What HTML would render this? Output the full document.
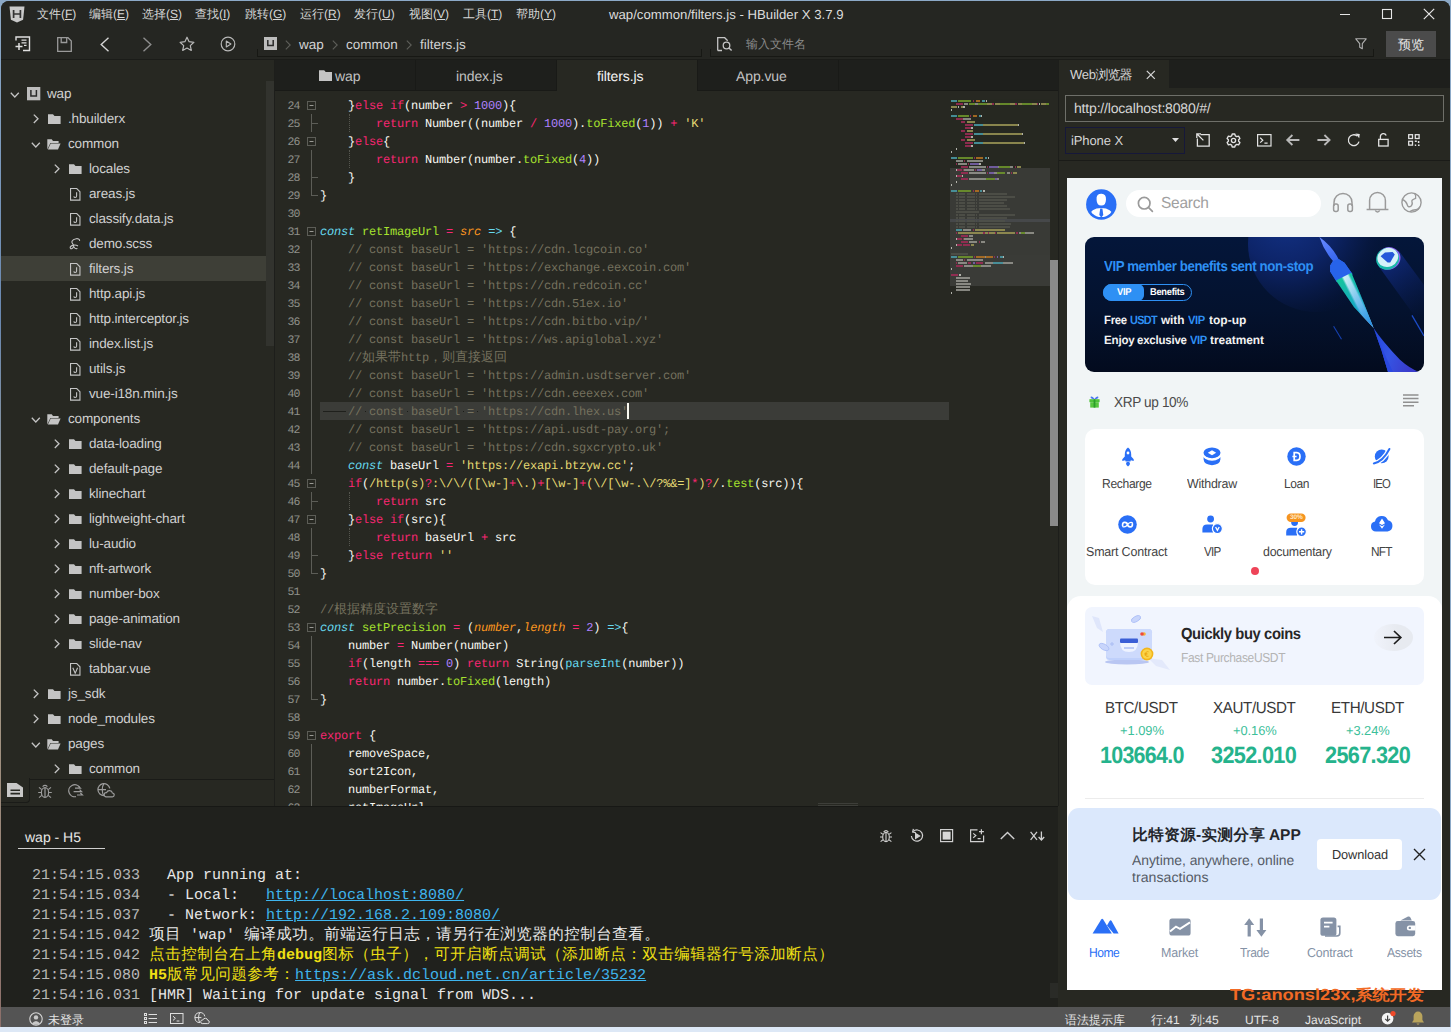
<!DOCTYPE html>
<html><head><meta charset="utf-8"><title>HBuilder X</title>
<style>
html,body{margin:0;padding:0}
body{width:1451px;height:1032px;position:relative;overflow:hidden;background:#dde8f6;text-rendering:geometricPrecision;font-family:"Liberation Sans",sans-serif;color:#ccc}
.a{position:absolute}
#win{position:absolute;left:1px;top:1px;width:1449px;height:1026px;background:#272822;border-radius:8px 8px 0 0;overflow:hidden}
/* every child below is positioned in page coords via #o offset */
#o{position:absolute;left:-1px;top:-1px;width:1451px;height:1032px}
.t{position:absolute;white-space:nowrap;line-height:1}
svg{position:absolute;overflow:visible}
.ic{stroke:#c8c8c8;fill:none;stroke-width:1.3}
/* menu */
.m{position:absolute;top:7px;font-size:12px;line-height:15px;color:#d6d6d6;white-space:nowrap}
/* tree */
.row{position:absolute;left:1px;width:265px;height:25px}
.row.sel{background:#3e3f37}
.tl{position:absolute;top:4px;font-size:13.5px;line-height:17px;color:#d0d0d0;white-space:nowrap;letter-spacing:-0.15px}
/* code */
.ln{position:absolute;left:275.5px;width:24px;text-align:right;font:11.5px/19px "Liberation Mono",monospace;color:#8f908a;letter-spacing:-0.9px}
.cl{position:absolute;left:320px;font:12px/18px "Liberation Mono",monospace;letter-spacing:-0.2px;color:#f8f8f2;white-space:pre;height:18px}
.k{color:#f92672}.f{color:#a6e22e}.s{color:#e6db74}.n{color:#ae81ff}.c{color:#75715e}.d{color:#66d9ef;font-style:italic}.p{color:#fd971f;font-style:italic}.b{color:#66d9ef}
.cj{font-family:"Liberation Sans",sans-serif;font-size:13px;letter-spacing:0;line-height:0}
/* console */
.co{position:absolute;left:32px;font:15px/20px "Liberation Mono",monospace;color:#e8e8e8;white-space:pre;height:20px}
.co .ts{color:#b8b8b8}
.co .y{color:#f0e014}
.co u{color:#3fb5ee}
.cz{font-family:"Liberation Sans",sans-serif;font-size:15.5px;line-height:0}
.z{display:inline-block;text-align:center;font-style:normal;line-height:0;height:0;vertical-align:baseline;white-space:nowrap;letter-spacing:0}
/* status */
.st{position:absolute;top:1012.5px;font-size:12px;line-height:14px;color:#e4e4e4;white-space:nowrap}
</style></head><body>
<div class="a" style="left:0;top:0;width:1451px;height:12px;background:#8ca9c7"></div><div class="a" style="left:0;top:12px;width:1px;height:1015px;background:linear-gradient(180deg,#8ca9c7,#6a88b0 30%,#a9a08a 60%,#8c6f6a 100%)"></div><div class="a" style="left:1450px;top:12px;width:1px;height:1015px;background:#8ca9c7"></div>
<div id="win"><div id="o">
<!-- ===== title / menu bar ===== -->
<div class="a" style="left:0;top:0;width:1451px;height:60px;background:#252622"></div>
<svg style="left:9px;top:6px" width="16" height="17" viewBox="0 0 16 17"><path d="M0.5 0.5h15l-1.4 13.2L8 16.5 1.9 13.7z" fill="#c9c9c9"/><path d="M4.6 4v8M11.4 4v8M4.6 8h6.8" stroke="#333" stroke-width="1.7" fill="none"/></svg>
<div class="m" style="left:37px"><i class="z" style="width:12px">文</i><i class="z" style="width:12px">件</i>(<u>F</u>)</div>
<div class="m" style="left:89px"><i class="z" style="width:12px">编</i><i class="z" style="width:12px">辑</i>(<u>E</u>)</div>
<div class="m" style="left:142px"><i class="z" style="width:12px">选</i><i class="z" style="width:12px">择</i>(<u>S</u>)</div>
<div class="m" style="left:195px"><i class="z" style="width:12px">查</i><i class="z" style="width:12px">找</i>(<u>I</u>)</div>
<div class="m" style="left:245px"><i class="z" style="width:12px">跳</i><i class="z" style="width:12px">转</i>(<u>G</u>)</div>
<div class="m" style="left:300px"><i class="z" style="width:12px">运</i><i class="z" style="width:12px">行</i>(<u>R</u>)</div>
<div class="m" style="left:354px"><i class="z" style="width:12px">发</i><i class="z" style="width:12px">行</i>(<u>U</u>)</div>
<div class="m" style="left:409px"><i class="z" style="width:12px">视</i><i class="z" style="width:12px">图</i>(<u>V</u>)</div>
<div class="m" style="left:463px"><i class="z" style="width:12px">工</i><i class="z" style="width:12px">具</i>(<u>T</u>)</div>
<div class="m" style="left:516px"><i class="z" style="width:12px">帮</i><i class="z" style="width:12px">助</i>(<u>Y</u>)</div>
<div class="m" style="left:609px;font-size:13.2px;color:#dcdcdc">wap/common/filters.js - HBuilder X 3.7.9</div>
<!-- window controls -->
<svg style="left:1339px;top:8px" width="12" height="12"><path d="M1 6.5h10" stroke="#e6e6e6" stroke-width="1.1"/></svg>
<svg style="left:1381px;top:8px" width="12" height="12"><rect x="1.5" y="1.5" width="9" height="9" fill="none" stroke="#e6e6e6" stroke-width="1.1"/></svg>
<svg style="left:1423px;top:8px" width="12" height="12"><path d="M0.8 0.8l10.4 10.4M11.2 0.8L0.8 11.2" stroke="#e6e6e6" stroke-width="1.2"/></svg>

<!-- ===== toolbar ===== -->
<!-- new file -->
<svg style="left:15px;top:36px" width="16" height="16" class="ic"><path d="M1 4.5V1h13.5v13.5H8" stroke="#e0e0e0" stroke-width="1.4"/><path d="M6.5 4.2h5M6.5 6.8h5M9 9.4h2.5" stroke="#e0e0e0" stroke-width="1.2"/><path d="M0.5 10.5h7M4 7v7" stroke="#e0e0e0" stroke-width="1.5"/></svg>
<!-- save -->
<svg style="left:57px;top:37px" width="15" height="15" class="ic"><path d="M0.7 0.7h10.3l3.3 3.3v10.3H0.7z" stroke="#9a9a9a"/><path d="M4.2 0.7v4.8h5.5V0.7" stroke="#9a9a9a"/></svg>
<!-- back -->
<svg style="left:100px;top:37px" width="10" height="15" class="ic"><path d="M8.5 0.8L1.2 7.5l7.3 6.7" stroke="#d4d4d4" stroke-width="1.4"/></svg>
<!-- fwd -->
<svg style="left:142px;top:37px" width="10" height="15" class="ic"><path d="M1.5 0.8l7.3 6.7-7.3 6.7" stroke="#8c8c8c" stroke-width="1.4"/></svg>
<!-- star -->
<svg style="left:179px;top:36px" width="16" height="16" class="ic"><path d="M8 1.2l2.1 4.5 4.8.6-3.6 3.3 1 4.8L8 12l-4.3 2.4 1-4.8L1.1 6.3l4.8-.6z" stroke="#b8b8b8" stroke-width="1.2" stroke-linejoin="round"/></svg>
<!-- play -->
<svg style="left:220px;top:36px" width="16" height="16" class="ic"><circle cx="8" cy="8" r="6.8" stroke="#b8b8b8" stroke-width="1.2"/><path d="M6.3 5l4.6 3-4.6 3z" stroke="#b8b8b8" stroke-width="1.1" stroke-linejoin="round"/></svg>
<!-- breadcrumb -->
<svg style="left:264px;top:37px" width="14" height="14"><rect x="0" y="0" width="13" height="13" fill="#bdbdbd"/><path d="M3.8 3v5.6h5.4V3" stroke="#2a2a2a" stroke-width="1.5" fill="none"/></svg>
<svg style="left:285px;top:39.5px" width="6" height="10"><path d="M0.8 0.6L5.2 5 0.8 9.4" fill="none" stroke="#5e5f5a" stroke-width="1.1"/></svg>
<div class="t" style="left:299px;top:38px;font-size:13.5px;color:#d2d2d2">wap</div>
<svg style="left:332px;top:39.5px" width="6" height="10"><path d="M0.8 0.6L5.2 5 0.8 9.4" fill="none" stroke="#5e5f5a" stroke-width="1.1"/></svg>
<div class="t" style="left:346px;top:38px;font-size:13.5px;color:#d2d2d2">common</div>
<svg style="left:406px;top:39.5px" width="6" height="10"><path d="M0.8 0.6L5.2 5 0.8 9.4" fill="none" stroke="#5e5f5a" stroke-width="1.1"/></svg>
<div class="t" style="left:420px;top:38px;font-size:13.5px;color:#d2d2d2">filters.js</div>
<div class="a" style="left:257px;top:56px;width:445px;height:1px;background:#171814"></div>
<div class="a" style="left:257px;top:49px;width:1px;height:7px;background:#171814"></div>
<div class="a" style="left:701px;top:49px;width:1px;height:7px;background:#171814"></div>
<!-- search -->
<svg style="left:717px;top:37px" width="16" height="15" class="ic"><path d="M0.7 13.5V0.7h7l3 3" stroke="#c4c4c4" stroke-width="1.3"/><path d="M0.7 13.5H5" stroke="#c4c4c4" stroke-width="1.3"/><circle cx="9.5" cy="8.5" r="3.3" stroke="#c4c4c4" stroke-width="1.3"/><path d="M12 11l2.6 2.6" stroke="#c4c4c4" stroke-width="1.4"/></svg>
<div class="t" style="left:746px;top:38px;font-size:12px;color:#8a8a8a"><i class="z" style="width:12px">输</i><i class="z" style="width:12px">入</i><i class="z" style="width:12px">文</i><i class="z" style="width:12px">件</i><i class="z" style="width:12px">名</i></div>
<div class="a" style="left:710px;top:56px;width:664px;height:1px;background:#171814"></div>
<div class="a" style="left:710px;top:49px;width:1px;height:7px;background:#171814"></div>
<div class="a" style="left:1373px;top:49px;width:1px;height:7px;background:#171814"></div>
<svg style="left:1355px;top:38px" width="12" height="12" class="ic"><path d="M0.8 0.8h10.4L7.3 5.6v5.2l-2.6-1.6V5.6z" stroke="#b0b0b0" stroke-width="1.1" stroke-linejoin="round"/></svg>
<div class="a" style="left:1386px;top:31px;width:50px;height:26px;background:#4b4b4b"></div>
<div class="t" style="left:1398px;top:38px;font-size:13px;color:#e6e6e6"><i class="z" style="width:13px">预</i><i class="z" style="width:13px">览</i></div>
<div class="a" style="left:0;top:59px;width:1451px;height:1px;background:#1b1c19"></div>
<!-- ===== sidebar ===== -->
<div class="a" style="left:0;top:60px;width:274px;height:747px;background:#272822;overflow:hidden">
<div class="a" style="left:0;top:-60px;width:274px;height:840px;overflow:hidden">
<div class="row" style="top:81px"><svg style="left:8.5px;top:10.5px" width="10" height="7"><path d="M0.8 0.8l4 4.2 4-4.2" fill="none" stroke="#c4c4c4" stroke-width="1.3"/></svg><svg style="left:25.5px;top:6px" width="14" height="14"><rect width="13.3" height="13.3" fill="#bdbdbd"/><path d="M3.9 3v5.9h5.5V3" stroke="#2a2a2a" stroke-width="1.5" fill="none"/></svg><div class="tl" style="left:46px">wap</div></div>
<div class="row" style="top:106px"><svg style="left:31.5px;top:8px" width="7" height="10"><path d="M0.8 0.6l4.2 4.2-4.2 4.2" fill="none" stroke="#c4c4c4" stroke-width="1.3"/></svg><svg style="left:47px;top:8px" width="13" height="10"><path d="M0 0.2h5l1.5 1.8H12.6V10H0z" fill="#c4c4c4"/></svg><div class="tl" style="left:67px">.hbuilderx</div></div>
<div class="row" style="top:131px"><svg style="left:29.5px;top:10.5px" width="10" height="7"><path d="M0.8 0.8l4 4.2 4-4.2" fill="none" stroke="#c4c4c4" stroke-width="1.3"/></svg><svg style="left:46px;top:7.5px" width="14" height="11"><path d="M0.3 10.5V0.3h4.4l1.3 1.6H11.6v2H3.4z" fill="#c4c4c4"/><path d="M3.7 4.5H13.6L11 10.5H0.9z" fill="#c4c4c4"/></svg><div class="tl" style="left:67px">common</div></div>
<div class="row" style="top:156px"><svg style="left:52.5px;top:8px" width="7" height="10"><path d="M0.8 0.6l4.2 4.2-4.2 4.2" fill="none" stroke="#c4c4c4" stroke-width="1.3"/></svg><svg style="left:68px;top:8px" width="13" height="10"><path d="M0 0.2h5l1.5 1.8H12.6V10H0z" fill="#c4c4c4"/></svg><div class="tl" style="left:88px">locales</div></div>
<div class="row" style="top:181px"><svg style="left:69px;top:6.5px" width="11" height="13"><path d="M0.55 0.55h6.2l3.2 3.2v8.4H0.55z" fill="none" stroke="#c4c4c4" stroke-width="1.1"/><path d="M6.6 4.2v3.8q0 1.5-1.4 1.5-1.2 0-1.4-1.1" fill="none" stroke="#c4c4c4" stroke-width="1.1"/></svg><div class="tl" style="left:88px">areas.js</div></div>
<div class="row" style="top:206px"><svg style="left:69px;top:6.5px" width="11" height="13"><path d="M0.55 0.55h6.2l3.2 3.2v8.4H0.55z" fill="none" stroke="#c4c4c4" stroke-width="1.1"/><path d="M6.6 4.2v3.8q0 1.5-1.4 1.5-1.2 0-1.4-1.1" fill="none" stroke="#c4c4c4" stroke-width="1.1"/></svg><div class="tl" style="left:88px">classify.data.js</div></div>
<div class="row" style="top:231px"><svg style="left:68px;top:5.5px" width="13" height="15"><path d="M10.6 3.4C10.6 0.6 4.2 1.4 3 4.2 2 6.6 5.4 7 4.6 9.6 4 11.6 1.4 12.6 1.2 10.8 1 8.8 5.8 7 8.6 8.8M4.6 9.6Q6 12.4 8 11.6" fill="none" stroke="#c4c4c4" stroke-width="1.1" stroke-linecap="round"/></svg><div class="tl" style="left:88px">demo.scss</div></div>
<div class="row sel" style="top:256px"><svg style="left:69px;top:6.5px" width="11" height="13"><path d="M0.55 0.55h6.2l3.2 3.2v8.4H0.55z" fill="none" stroke="#c4c4c4" stroke-width="1.1"/><path d="M6.6 4.2v3.8q0 1.5-1.4 1.5-1.2 0-1.4-1.1" fill="none" stroke="#c4c4c4" stroke-width="1.1"/></svg><div class="tl" style="left:88px">filters.js</div></div>
<div class="row" style="top:281px"><svg style="left:69px;top:6.5px" width="11" height="13"><path d="M0.55 0.55h6.2l3.2 3.2v8.4H0.55z" fill="none" stroke="#c4c4c4" stroke-width="1.1"/><path d="M6.6 4.2v3.8q0 1.5-1.4 1.5-1.2 0-1.4-1.1" fill="none" stroke="#c4c4c4" stroke-width="1.1"/></svg><div class="tl" style="left:88px">http.api.js</div></div>
<div class="row" style="top:306px"><svg style="left:69px;top:6.5px" width="11" height="13"><path d="M0.55 0.55h6.2l3.2 3.2v8.4H0.55z" fill="none" stroke="#c4c4c4" stroke-width="1.1"/><path d="M6.6 4.2v3.8q0 1.5-1.4 1.5-1.2 0-1.4-1.1" fill="none" stroke="#c4c4c4" stroke-width="1.1"/></svg><div class="tl" style="left:88px">http.interceptor.js</div></div>
<div class="row" style="top:331px"><svg style="left:69px;top:6.5px" width="11" height="13"><path d="M0.55 0.55h6.2l3.2 3.2v8.4H0.55z" fill="none" stroke="#c4c4c4" stroke-width="1.1"/><path d="M6.6 4.2v3.8q0 1.5-1.4 1.5-1.2 0-1.4-1.1" fill="none" stroke="#c4c4c4" stroke-width="1.1"/></svg><div class="tl" style="left:88px">index.list.js</div></div>
<div class="row" style="top:356px"><svg style="left:69px;top:6.5px" width="11" height="13"><path d="M0.55 0.55h6.2l3.2 3.2v8.4H0.55z" fill="none" stroke="#c4c4c4" stroke-width="1.1"/><path d="M6.6 4.2v3.8q0 1.5-1.4 1.5-1.2 0-1.4-1.1" fill="none" stroke="#c4c4c4" stroke-width="1.1"/></svg><div class="tl" style="left:88px">utils.js</div></div>
<div class="row" style="top:381px"><svg style="left:69px;top:6.5px" width="11" height="13"><path d="M0.55 0.55h6.2l3.2 3.2v8.4H0.55z" fill="none" stroke="#c4c4c4" stroke-width="1.1"/><path d="M6.6 4.2v3.8q0 1.5-1.4 1.5-1.2 0-1.4-1.1" fill="none" stroke="#c4c4c4" stroke-width="1.1"/></svg><div class="tl" style="left:88px">vue-i18n.min.js</div></div>
<div class="row" style="top:406px"><svg style="left:29.5px;top:10.5px" width="10" height="7"><path d="M0.8 0.8l4 4.2 4-4.2" fill="none" stroke="#c4c4c4" stroke-width="1.3"/></svg><svg style="left:46px;top:7.5px" width="14" height="11"><path d="M0.3 10.5V0.3h4.4l1.3 1.6H11.6v2H3.4z" fill="#c4c4c4"/><path d="M3.7 4.5H13.6L11 10.5H0.9z" fill="#c4c4c4"/></svg><div class="tl" style="left:67px">components</div></div>
<div class="row" style="top:431px"><svg style="left:52.5px;top:8px" width="7" height="10"><path d="M0.8 0.6l4.2 4.2-4.2 4.2" fill="none" stroke="#c4c4c4" stroke-width="1.3"/></svg><svg style="left:68px;top:8px" width="13" height="10"><path d="M0 0.2h5l1.5 1.8H12.6V10H0z" fill="#c4c4c4"/></svg><div class="tl" style="left:88px">data-loading</div></div>
<div class="row" style="top:456px"><svg style="left:52.5px;top:8px" width="7" height="10"><path d="M0.8 0.6l4.2 4.2-4.2 4.2" fill="none" stroke="#c4c4c4" stroke-width="1.3"/></svg><svg style="left:68px;top:8px" width="13" height="10"><path d="M0 0.2h5l1.5 1.8H12.6V10H0z" fill="#c4c4c4"/></svg><div class="tl" style="left:88px">default-page</div></div>
<div class="row" style="top:481px"><svg style="left:52.5px;top:8px" width="7" height="10"><path d="M0.8 0.6l4.2 4.2-4.2 4.2" fill="none" stroke="#c4c4c4" stroke-width="1.3"/></svg><svg style="left:68px;top:8px" width="13" height="10"><path d="M0 0.2h5l1.5 1.8H12.6V10H0z" fill="#c4c4c4"/></svg><div class="tl" style="left:88px">klinechart</div></div>
<div class="row" style="top:506px"><svg style="left:52.5px;top:8px" width="7" height="10"><path d="M0.8 0.6l4.2 4.2-4.2 4.2" fill="none" stroke="#c4c4c4" stroke-width="1.3"/></svg><svg style="left:68px;top:8px" width="13" height="10"><path d="M0 0.2h5l1.5 1.8H12.6V10H0z" fill="#c4c4c4"/></svg><div class="tl" style="left:88px">lightweight-chart</div></div>
<div class="row" style="top:531px"><svg style="left:52.5px;top:8px" width="7" height="10"><path d="M0.8 0.6l4.2 4.2-4.2 4.2" fill="none" stroke="#c4c4c4" stroke-width="1.3"/></svg><svg style="left:68px;top:8px" width="13" height="10"><path d="M0 0.2h5l1.5 1.8H12.6V10H0z" fill="#c4c4c4"/></svg><div class="tl" style="left:88px">lu-audio</div></div>
<div class="row" style="top:556px"><svg style="left:52.5px;top:8px" width="7" height="10"><path d="M0.8 0.6l4.2 4.2-4.2 4.2" fill="none" stroke="#c4c4c4" stroke-width="1.3"/></svg><svg style="left:68px;top:8px" width="13" height="10"><path d="M0 0.2h5l1.5 1.8H12.6V10H0z" fill="#c4c4c4"/></svg><div class="tl" style="left:88px">nft-artwork</div></div>
<div class="row" style="top:581px"><svg style="left:52.5px;top:8px" width="7" height="10"><path d="M0.8 0.6l4.2 4.2-4.2 4.2" fill="none" stroke="#c4c4c4" stroke-width="1.3"/></svg><svg style="left:68px;top:8px" width="13" height="10"><path d="M0 0.2h5l1.5 1.8H12.6V10H0z" fill="#c4c4c4"/></svg><div class="tl" style="left:88px">number-box</div></div>
<div class="row" style="top:606px"><svg style="left:52.5px;top:8px" width="7" height="10"><path d="M0.8 0.6l4.2 4.2-4.2 4.2" fill="none" stroke="#c4c4c4" stroke-width="1.3"/></svg><svg style="left:68px;top:8px" width="13" height="10"><path d="M0 0.2h5l1.5 1.8H12.6V10H0z" fill="#c4c4c4"/></svg><div class="tl" style="left:88px">page-animation</div></div>
<div class="row" style="top:631px"><svg style="left:52.5px;top:8px" width="7" height="10"><path d="M0.8 0.6l4.2 4.2-4.2 4.2" fill="none" stroke="#c4c4c4" stroke-width="1.3"/></svg><svg style="left:68px;top:8px" width="13" height="10"><path d="M0 0.2h5l1.5 1.8H12.6V10H0z" fill="#c4c4c4"/></svg><div class="tl" style="left:88px">slide-nav</div></div>
<div class="row" style="top:656px"><svg style="left:69px;top:6.5px" width="11" height="13"><path d="M0.55 0.55h6.2l3.2 3.2v8.4H0.55z" fill="none" stroke="#c4c4c4" stroke-width="1.1"/><path d="M2.8 4.8l2.4 5.4 2.4-5.4" fill="none" stroke="#c4c4c4" stroke-width="1.1"/></svg><div class="tl" style="left:88px">tabbar.vue</div></div>
<div class="row" style="top:681px"><svg style="left:31.5px;top:8px" width="7" height="10"><path d="M0.8 0.6l4.2 4.2-4.2 4.2" fill="none" stroke="#c4c4c4" stroke-width="1.3"/></svg><svg style="left:47px;top:8px" width="13" height="10"><path d="M0 0.2h5l1.5 1.8H12.6V10H0z" fill="#c4c4c4"/></svg><div class="tl" style="left:67px">js_sdk</div></div>
<div class="row" style="top:706px"><svg style="left:31.5px;top:8px" width="7" height="10"><path d="M0.8 0.6l4.2 4.2-4.2 4.2" fill="none" stroke="#c4c4c4" stroke-width="1.3"/></svg><svg style="left:47px;top:8px" width="13" height="10"><path d="M0 0.2h5l1.5 1.8H12.6V10H0z" fill="#c4c4c4"/></svg><div class="tl" style="left:67px">node_modules</div></div>
<div class="row" style="top:731px"><svg style="left:29.5px;top:10.5px" width="10" height="7"><path d="M0.8 0.8l4 4.2 4-4.2" fill="none" stroke="#c4c4c4" stroke-width="1.3"/></svg><svg style="left:46px;top:7.5px" width="14" height="11"><path d="M0.3 10.5V0.3h4.4l1.3 1.6H11.6v2H3.4z" fill="#c4c4c4"/><path d="M3.7 4.5H13.6L11 10.5H0.9z" fill="#c4c4c4"/></svg><div class="tl" style="left:67px">pages</div></div>
<div class="row" style="top:756px"><svg style="left:52.5px;top:8px" width="7" height="10"><path d="M0.8 0.6l4.2 4.2-4.2 4.2" fill="none" stroke="#c4c4c4" stroke-width="1.3"/></svg><svg style="left:68px;top:8px" width="13" height="10"><path d="M0 0.2h5l1.5 1.8H12.6V10H0z" fill="#c4c4c4"/></svg><div class="tl" style="left:88px">common</div></div>
</div>
<div class="a" style="left:266px;top:21px;width:8px;height:265px;background:#32332e"></div>
<div class="a" style="left:0;top:719px;width:274px;height:27px;background:#272822"></div>
<div class="a" style="left:0;top:719px;width:274px;height:1px;background:#1a1b18"></div>
<div class="a" style="left:1px;top:718px;width:28px;height:24px;background:#272822;border-right:1px solid #1a1b18;border-bottom:1px solid #1a1b18;border-radius:0 0 4px 0"></div>
<svg style="left:7px;top:723px" width="17" height="15"><path d="M0 0h9.5l6.5 4.5V14H0z" fill="#c8c8c8"/><path d="M3.5 7.2h9.5M3.5 10.6h9.5" stroke="#272822" stroke-width="1.6"/></svg>
<svg style="left:37px;top:723px" width="16" height="16" fill="none" stroke="#9c9c9c" stroke-width="1.2"><ellipse cx="8" cy="9.5" rx="3.6" ry="4.8"/><path d="M8 4.7v9.6M5.6 3.6Q8 1.2 10.4 3.6M4.4 9.5H1.2M11.6 9.5h3.2M4.8 6.6L2 4.4M11.2 6.6L14 4.4M4.8 12.4L2 14.6M11.2 12.4L14 14.6"/></svg>
<svg style="left:67px;top:723px" width="16" height="16" fill="none" stroke="#9c9c9c" stroke-width="1.2"><path d="M12.6 4.2A6 6 0 1 0 9 13.6"/><path d="M8 5.2h5.4l-1.6-1.6M6.6 8.6h8l-2-2M10 12h5.4l-2-2"/></svg>
<svg style="left:97px;top:723px" width="18" height="16" fill="none" stroke="#9c9c9c" stroke-width="1.2"><path d="M7 12.6A6 6 0 1 1 12.8 5.4"/><path d="M6.8 0.8C4.8 3.6 4.8 9.2 6.6 12.4M1 6.6h8"/><path d="M9 13.8h6.2a1.9 1.9 0 0 0 .2-3.8 3 3 0 0 0-5.8-.4A2.1 2.1 0 0 0 9 13.8z"/></svg>
</div>
<div class="a" style="left:274px;top:60px;width:1px;height:746px;background:#1d1e1b"></div>
<!-- ===== editor tabs ===== -->
<div class="a" style="left:275px;top:60px;width:783px;height:31px;background:#1e1f1c"></div>
<div class="a" style="left:275px;top:60px;width:141px;height:30px;background:#1e1f1c;border-right:1px solid #191a17;box-sizing:border-box"></div>
<div class="a" style="left:416px;top:60px;width:141px;height:30px;background:#1e1f1c;border-right:1px solid #191a17;box-sizing:border-box"></div>
<div class="a" style="left:557px;top:60px;width:141px;height:31px;background:#272822;border-right:1px solid #191a17;box-sizing:border-box"></div>
<div class="a" style="left:698px;top:60px;width:141px;height:30px;background:#1e1f1c;border-right:1px solid #191a17;box-sizing:border-box"></div>
<svg style="left:319px;top:70px" width="13" height="11"><path d="M0 0.3h5.2l1.5 1.8H13V11H0z" fill="#c4c4c4"/></svg>
<div class="t" style="left:335px;top:69px;font-size:14px;letter-spacing:-0.1px;color:#c2c2c2">wap</div>
<div class="t" style="left:456px;top:69px;font-size:14px;letter-spacing:-0.1px;color:#c2c2c2">index.js</div>
<div class="t" style="left:597px;top:69px;font-size:14px;letter-spacing:-0.1px;color:#f4f4f4">filters.js</div>
<div class="t" style="left:736px;top:69px;font-size:14px;letter-spacing:-0.1px;color:#c2c2c2">App.vue</div>
<div class="a" style="left:275px;top:90px;width:282px;height:1px;background:#191a17"></div>
<div class="a" style="left:698px;top:90px;width:360px;height:1px;background:#191a17"></div>
<!-- ===== editor ===== -->
<div class="a" style="left:275px;top:91px;width:783px;height:715px;background:#272822;overflow:hidden"><div class="a" style="left:-275px;top:-91px;width:1451px;height:1032px">
<div class="a" style="left:320px;top:402px;width:629px;height:18px;background:#3b3c38"></div>
<div class="ln" style="top:97px">24</div><div class="cl" style="top:97px">    }<span class="k">else if</span>(number <span class="k">&gt;</span> <span class="n">1000</span>){</div>
<div class="ln" style="top:115px">25</div><div class="cl" style="top:115px">        <span class="k">return</span> Number((number <span class="k">/</span> <span class="n">1000</span>).<span class="f">toFixed</span>(<span class="n">1</span>)) <span class="k">+</span> <span class="s">&#x27;K&#x27;</span></div>
<div class="ln" style="top:133px">26</div><div class="cl" style="top:133px">    }<span class="k">else</span>{</div>
<div class="ln" style="top:151px">27</div><div class="cl" style="top:151px">        <span class="k">return</span> Number(number.<span class="f">toFixed</span>(<span class="n">4</span>))</div>
<div class="ln" style="top:169px">28</div><div class="cl" style="top:169px">    }</div>
<div class="ln" style="top:187px">29</div><div class="cl" style="top:187px">}</div>
<div class="ln" style="top:205px">30</div><div class="cl" style="top:205px"></div>
<div class="ln" style="top:223px">31</div><div class="cl" style="top:223px"><span class="d">const</span> <span class="f">retImageUrl</span> <span class="k">=</span> <span class="p">src</span> <span class="b">=&gt;</span> {</div>
<div class="ln" style="top:241px">32</div><div class="cl" style="top:241px">    <span class="c">// const baseUrl = &#x27;https://cdn.lcgcoin.co&#x27;</span></div>
<div class="ln" style="top:259px">33</div><div class="cl" style="top:259px">    <span class="c">// const baseUrl = &#x27;https://exchange.eexcoin.com&#x27;</span></div>
<div class="ln" style="top:277px">34</div><div class="cl" style="top:277px">    <span class="c">// const baseUrl = &#x27;https://cdn.redcoin.cc&#x27;</span></div>
<div class="ln" style="top:295px">35</div><div class="cl" style="top:295px">    <span class="c">// const baseUrl = &#x27;https://cdn.51ex.io&#x27;</span></div>
<div class="ln" style="top:313px">36</div><div class="cl" style="top:313px">    <span class="c">// const baseUrl = &#x27;https://cdn.bitbo.vip/&#x27;</span></div>
<div class="ln" style="top:331px">37</div><div class="cl" style="top:331px">    <span class="c">// const baseUrl = &#x27;https://ws.apiglobal.xyz&#x27;</span></div>
<div class="ln" style="top:349px">38</div><div class="cl" style="top:349px">    <span class="c">//</span><span class="c cj"><i class="z" style="width:13px">如</i><i class="z" style="width:13px">果</i><i class="z" style="width:13px">带</i></span><span class="c">http</span><span class="c cj"><i class="z" style="width:13px">，</i><i class="z" style="width:13px">则</i><i class="z" style="width:13px">直</i><i class="z" style="width:13px">接</i><i class="z" style="width:13px">返</i><i class="z" style="width:13px">回</i></span></div>
<div class="ln" style="top:367px">39</div><div class="cl" style="top:367px">    <span class="c">// const baseUrl = &#x27;https://admin.usdtserver.com&#x27;</span></div>
<div class="ln" style="top:385px">40</div><div class="cl" style="top:385px">    <span class="c">// const baseUrl = &#x27;https://cdn.eeexex.com&#x27;</span></div>
<div class="ln" style="top:403px">41</div><div class="cl" style="top:403px">    <span class="c">// const baseUrl = &#x27;https://cdn.lhex.us&#x27;</span></div>
<div class="ln" style="top:421px">42</div><div class="cl" style="top:421px">    <span class="c">// const baseUrl = &#x27;https://api.usdt-pay.org&#x27;;</span></div>
<div class="ln" style="top:439px">43</div><div class="cl" style="top:439px">    <span class="c">// const baseUrl = &#x27;https://cdn.sgxcrypto.uk&#x27;</span></div>
<div class="ln" style="top:457px">44</div><div class="cl" style="top:457px">    <span class="d">const</span> baseUrl <span class="k">=</span> <span class="s">&#x27;https://exapi.btzyw.cc&#x27;</span>;</div>
<div class="ln" style="top:475px">45</div><div class="cl" style="top:475px">    <span class="k">if</span>(<span class="s">/http(s)</span><span class="k">?</span><span class="s">:\/\/([\w-]</span><span class="k">+</span><span class="s">\.)</span><span class="k">+</span><span class="s">[\w-]</span><span class="k">+</span><span class="s">(\/[\w-.\/?%&amp;=]</span><span class="k">*</span><span class="s">)</span><span class="k">?</span><span class="s">/</span>.<span class="f">test</span>(src)){</div>
<div class="ln" style="top:493px">46</div><div class="cl" style="top:493px">        <span class="k">return</span> src</div>
<div class="ln" style="top:511px">47</div><div class="cl" style="top:511px">    }<span class="k">else if</span>(src){</div>
<div class="ln" style="top:529px">48</div><div class="cl" style="top:529px">        <span class="k">return</span> baseUrl <span class="k">+</span> src</div>
<div class="ln" style="top:547px">49</div><div class="cl" style="top:547px">    }<span class="k">else return</span> <span class="s">&#x27;&#x27;</span></div>
<div class="ln" style="top:565px">50</div><div class="cl" style="top:565px">}</div>
<div class="ln" style="top:583px">51</div><div class="cl" style="top:583px"></div>
<div class="ln" style="top:601px">52</div><div class="cl" style="top:601px"><span class="c">//</span><span class="c cj"><i class="z" style="width:13px">根</i><i class="z" style="width:13px">据</i><i class="z" style="width:13px">精</i><i class="z" style="width:13px">度</i><i class="z" style="width:13px">设</i><i class="z" style="width:13px">置</i><i class="z" style="width:13px">数</i><i class="z" style="width:13px">字</i></span></div>
<div class="ln" style="top:619px">53</div><div class="cl" style="top:619px"><span class="d">const</span> <span class="f">setPrecision</span> <span class="k">=</span> (<span class="p">number</span>,<span class="p">length</span> <span class="k">=</span> <span class="n">2</span>) <span class="b">=&gt;</span>{</div>
<div class="ln" style="top:637px">54</div><div class="cl" style="top:637px">    number <span class="k">=</span> Number(number)</div>
<div class="ln" style="top:655px">55</div><div class="cl" style="top:655px">    <span class="k">if</span>(length <span class="k">===</span> <span class="n">0</span>) <span class="k">return</span> String(<span class="b">parseInt</span>(number))</div>
<div class="ln" style="top:673px">56</div><div class="cl" style="top:673px">    <span class="k">return</span> number.<span class="f">toFixed</span>(length)</div>
<div class="ln" style="top:691px">57</div><div class="cl" style="top:691px">}</div>
<div class="ln" style="top:709px">58</div><div class="cl" style="top:709px"></div>
<div class="ln" style="top:727px">59</div><div class="cl" style="top:727px"><span class="k">export</span> {</div>
<div class="ln" style="top:745px">60</div><div class="cl" style="top:745px">    removeSpace,</div>
<div class="ln" style="top:763px">61</div><div class="cl" style="top:763px">    sort2Icon,</div>
<div class="ln" style="top:781px">62</div><div class="cl" style="top:781px">    numberFormat,</div>
<div class="ln" style="top:799px">63</div><div class="cl" style="top:799px">    retImageUrl,</div>
<svg style="left:307px;top:101px" width="9" height="9"><rect x="0.5" y="0.5" width="8" height="8" fill="none" stroke="#5c5d57"/><path d="M2.5 4.5h4" stroke="#9a9a95"/></svg>
<svg style="left:307px;top:137px" width="9" height="9"><rect x="0.5" y="0.5" width="8" height="8" fill="none" stroke="#5c5d57"/><path d="M2.5 4.5h4" stroke="#9a9a95"/></svg>
<svg style="left:307px;top:227px" width="9" height="9"><rect x="0.5" y="0.5" width="8" height="8" fill="none" stroke="#5c5d57"/><path d="M2.5 4.5h4" stroke="#9a9a95"/></svg>
<svg style="left:307px;top:479px" width="9" height="9"><rect x="0.5" y="0.5" width="8" height="8" fill="none" stroke="#5c5d57"/><path d="M2.5 4.5h4" stroke="#9a9a95"/></svg>
<svg style="left:307px;top:515px" width="9" height="9"><rect x="0.5" y="0.5" width="8" height="8" fill="none" stroke="#5c5d57"/><path d="M2.5 4.5h4" stroke="#9a9a95"/></svg>
<svg style="left:307px;top:623px" width="9" height="9"><rect x="0.5" y="0.5" width="8" height="8" fill="none" stroke="#5c5d57"/><path d="M2.5 4.5h4" stroke="#9a9a95"/></svg>
<svg style="left:307px;top:731px" width="9" height="9"><rect x="0.5" y="0.5" width="8" height="8" fill="none" stroke="#5c5d57"/><path d="M2.5 4.5h4" stroke="#9a9a95"/></svg>
<div class="a" style="left:311px;top:114px;width:1px;height:18px;background:#5c5d57"></div>
<div class="a" style="left:311px;top:123px;width:7px;height:1px;background:#5c5d57"></div>
<div class="a" style="left:311px;top:150px;width:1px;height:46px;background:#5c5d57"></div>
<div class="a" style="left:311px;top:177px;width:7px;height:1px;background:#5c5d57"></div>
<div class="a" style="left:311px;top:195px;width:7px;height:1px;background:#5c5d57"></div>
<div class="a" style="left:311px;top:240px;width:1px;height:234px;background:#5c5d57"></div>
<div class="a" style="left:311px;top:492px;width:1px;height:18px;background:#5c5d57"></div>
<div class="a" style="left:311px;top:501px;width:7px;height:1px;background:#5c5d57"></div>
<div class="a" style="left:311px;top:528px;width:1px;height:46px;background:#5c5d57"></div>
<div class="a" style="left:311px;top:555px;width:7px;height:1px;background:#5c5d57"></div>
<div class="a" style="left:311px;top:573px;width:7px;height:1px;background:#5c5d57"></div>
<div class="a" style="left:311px;top:636px;width:1px;height:64px;background:#5c5d57"></div>
<div class="a" style="left:311px;top:699px;width:7px;height:1px;background:#5c5d57"></div>
<div class="a" style="left:311px;top:744px;width:1px;height:72px;background:#5c5d57"></div>
<div class="a" style="left:349px;top:114px;width:0;height:18px;border-left:1px dotted #55564f"></div>
<div class="a" style="left:349px;top:150px;width:0;height:18px;border-left:1px dotted #55564f"></div>
<div class="a" style="left:349px;top:492px;width:0;height:18px;border-left:1px dotted #55564f"></div>
<div class="a" style="left:349px;top:528px;width:0;height:18px;border-left:1px dotted #55564f"></div>
<div class="a" style="left:323px;top:411px;width:23px;height:1px;background:#1f201c"></div>
<div class="a" style="left:365px;top:411px;width:1px;height:1px;background:#1c1d19"></div>
<div class="a" style="left:407px;top:411px;width:1px;height:1px;background:#1c1d19"></div>
<div class="a" style="left:463px;top:411px;width:1px;height:1px;background:#1c1d19"></div>
<div class="a" style="left:477px;top:411px;width:1px;height:1px;background:#1c1d19"></div>
<div class="a" style="left:627px;top:403px;width:2px;height:16px;background:#f8f8f0"></div>
</div></div>
<!-- ===== minimap ===== -->
<div class="a" style="left:950px;top:168px;width:100px;height:118px;background:#3a3b37"></div>
<div class="a" style="left:950px;top:219px;width:100px;height:3px;background:#47484a"></div>
<svg style="left:0;top:0" width="1451" height="300" shape-rendering="crispEdges" opacity="0.88">
<rect x="950.9" y="99.9" width="6.1" height="2" fill="#4b9aa6"/>
<rect x="958.1" y="99.9" width="12.9" height="2" fill="#6f962c"/>
<rect x="972.7" y="99.9" width="0.9" height="2" fill="#9c2c55"/>
<rect x="976.0" y="99.9" width="4.4" height="2" fill="#b27122"/>
<rect x="982.1" y="99.9" width="2.6" height="2" fill="#4b9aa6"/>
<rect x="985.8" y="99.9" width="0.9" height="2" fill="#c4c4bc"/>
<rect x="955.9" y="102.9" width="7.0" height="2" fill="#9c2c55"/>
<rect x="964.0" y="102.9" width="4.4" height="2" fill="#94948e"/>
<rect x="968.8" y="102.9" width="6.1" height="2" fill="#6f962c"/>
<rect x="974.9" y="102.9" width="3.3" height="2" fill="#94948e"/>
<rect x="978.2" y="102.9" width="8.7" height="2" fill="#6f962c"/>
<rect x="986.9" y="102.9" width="5.5" height="2" fill="#989254"/>
<rect x="992.3" y="102.9" width="1.3" height="2" fill="#9c2c55"/>
<rect x="995.0" y="102.9" width="5.0" height="2" fill="#989254"/>
<rect x="1000.0" y="102.9" width="9.8" height="2" fill="#6f962c"/>
<rect x="1009.8" y="102.9" width="5.5" height="2" fill="#989254"/>
<rect x="1015.3" y="102.9" width="1.3" height="2" fill="#9c2c55"/>
<rect x="1018.1" y="102.9" width="4.4" height="2" fill="#989254"/>
<rect x="1022.4" y="102.9" width="9.2" height="2" fill="#6f962c"/>
<rect x="1031.6" y="102.9" width="5.5" height="2" fill="#989254"/>
<rect x="1037.1" y="102.9" width="1.3" height="2" fill="#9c2c55"/>
<rect x="1039.2" y="102.9" width="1.1" height="2" fill="#c4c4bc"/>
<rect x="1041.0" y="102.9" width="4.8" height="2" fill="#989254"/>
<rect x="1045.8" y="102.9" width="3.3" height="2" fill="#6f962c"/>
<rect x="950.9" y="105.9" width="6.5" height="2" fill="#989254"/>
<rect x="957.9" y="105.9" width="0.9" height="2" fill="#c4c4bc"/>
<rect x="961.2" y="105.9" width="1.7" height="2" fill="#989254"/>
<rect x="962.9" y="105.9" width="2.0" height="2" fill="#c4c4bc"/>
<rect x="950.9" y="108.9" width="0.9" height="2" fill="#c4c4bc"/>
<rect x="950.9" y="114.9" width="6.1" height="2" fill="#4b9aa6"/>
<rect x="958.1" y="114.9" width="10.9" height="2" fill="#6f962c"/>
<rect x="970.1" y="114.9" width="0.9" height="2" fill="#9c2c55"/>
<rect x="972.7" y="114.9" width="4.4" height="2" fill="#b27122"/>
<rect x="978.8" y="114.9" width="2.6" height="2" fill="#4b9aa6"/>
<rect x="981.0" y="114.9" width="0.9" height="2" fill="#c4c4bc"/>
<rect x="955.9" y="117.9" width="7.0" height="2" fill="#9c2c55"/>
<rect x="962.9" y="117.9" width="8.1" height="2" fill="#94948e"/>
<rect x="961.2" y="120.9" width="3.9" height="2" fill="#9c2c55"/>
<rect x="966.8" y="120.9" width="8.1" height="2" fill="#989254"/>
<rect x="965.1" y="123.9" width="7.6" height="2" fill="#9c2c55"/>
<rect x="973.8" y="123.9" width="8.7" height="2" fill="#4b9aa6"/>
<rect x="982.5" y="123.9" width="35.6" height="2" fill="#989254"/>
<rect x="1018.1" y="123.9" width="1.1" height="2" fill="#c4c4bc"/>
<rect x="965.1" y="126.9" width="6.1" height="2" fill="#9c2c55"/>
<rect x="971.2" y="126.9" width="1.7" height="2" fill="#c4c4bc"/>
<rect x="961.2" y="129.9" width="3.9" height="2" fill="#9c2c55"/>
<rect x="966.8" y="129.9" width="6.1" height="2" fill="#989254"/>
<rect x="965.1" y="132.9" width="7.6" height="2" fill="#9c2c55"/>
<rect x="973.8" y="132.9" width="8.7" height="2" fill="#4b9aa6"/>
<rect x="982.5" y="132.9" width="39.5" height="2" fill="#989254"/>
<rect x="1022.0" y="132.9" width="1.1" height="2" fill="#c4c4bc"/>
<rect x="965.1" y="135.9" width="6.1" height="2" fill="#9c2c55"/>
<rect x="971.2" y="135.9" width="1.7" height="2" fill="#c4c4bc"/>
<rect x="961.2" y="138.9" width="3.9" height="2" fill="#9c2c55"/>
<rect x="966.8" y="138.9" width="8.1" height="2" fill="#989254"/>
<rect x="965.1" y="141.9" width="7.6" height="2" fill="#9c2c55"/>
<rect x="973.8" y="141.9" width="8.7" height="2" fill="#4b9aa6"/>
<rect x="982.5" y="141.9" width="41.7" height="2" fill="#989254"/>
<rect x="1024.2" y="141.9" width="1.1" height="2" fill="#c4c4bc"/>
<rect x="965.1" y="144.9" width="6.1" height="2" fill="#9c2c55"/>
<rect x="971.2" y="144.9" width="1.7" height="2" fill="#c4c4bc"/>
<rect x="955.9" y="147.9" width="0.9" height="2" fill="#c4c4bc"/>
<rect x="950.9" y="150.9" width="0.9" height="2" fill="#c4c4bc"/>
<rect x="950.9" y="156.9" width="6.1" height="2" fill="#4b9aa6"/>
<rect x="958.1" y="156.9" width="14.8" height="2" fill="#6f962c"/>
<rect x="974.0" y="156.9" width="0.9" height="2" fill="#9c2c55"/>
<rect x="976.0" y="156.9" width="7.0" height="2" fill="#b27122"/>
<rect x="985.2" y="156.9" width="1.7" height="2" fill="#4b9aa6"/>
<rect x="988.0" y="156.9" width="0.9" height="2" fill="#c4c4bc"/>
<rect x="955.9" y="159.9" width="7.0" height="2" fill="#94948e"/>
<rect x="964.0" y="159.9" width="0.9" height="2" fill="#9c2c55"/>
<rect x="966.8" y="159.9" width="16.1" height="2" fill="#94948e"/>
<rect x="955.9" y="162.9" width="1.3" height="2" fill="#9c2c55"/>
<rect x="957.9" y="162.9" width="8.9" height="2" fill="#94948e"/>
<rect x="967.9" y="162.9" width="0.9" height="2" fill="#9c2c55"/>
<rect x="969.9" y="162.9" width="9.4" height="2" fill="#7a62ad"/>
<rect x="979.3" y="162.9" width="1.7" height="2" fill="#c4c4bc"/>
<rect x="961.2" y="165.9" width="6.8" height="2" fill="#9c2c55"/>
<rect x="969.0" y="165.9" width="16.8" height="2" fill="#94948e"/>
<rect x="986.9" y="165.9" width="0.9" height="2" fill="#9c2c55"/>
<rect x="989.1" y="165.9" width="8.7" height="2" fill="#7a62ad"/>
<rect x="997.8" y="165.9" width="1.5" height="2" fill="#94948e"/>
<rect x="999.3" y="165.9" width="10.5" height="2" fill="#6f962c"/>
<rect x="1009.8" y="165.9" width="3.3" height="2" fill="#94948e"/>
<rect x="1014.8" y="165.9" width="0.9" height="2" fill="#9c2c55"/>
<rect x="1017.0" y="165.9" width="4.1" height="2" fill="#989254"/>
<rect x="955.9" y="168.9" width="1.1" height="2" fill="#c4c4bc"/>
<rect x="957.0" y="168.9" width="4.8" height="2" fill="#9c2c55"/>
<rect x="962.9" y="168.9" width="1.5" height="2" fill="#9c2c55"/>
<rect x="964.4" y="168.9" width="9.4" height="2" fill="#94948e"/>
<rect x="974.9" y="168.9" width="0.9" height="2" fill="#9c2c55"/>
<rect x="977.1" y="168.9" width="4.8" height="2" fill="#7a62ad"/>
<rect x="981.9" y="168.9" width="3.1" height="2" fill="#94948e"/>
<rect x="961.2" y="171.9" width="6.8" height="2" fill="#9c2c55"/>
<rect x="969.0" y="171.9" width="16.8" height="2" fill="#94948e"/>
<rect x="986.9" y="171.9" width="0.9" height="2" fill="#9c2c55"/>
<rect x="989.1" y="171.9" width="4.8" height="2" fill="#7a62ad"/>
<rect x="993.9" y="171.9" width="3.3" height="2" fill="#94948e"/>
<rect x="997.1" y="171.9" width="8.3" height="2" fill="#6f962c"/>
<rect x="1006.5" y="171.9" width="3.3" height="2" fill="#94948e"/>
<rect x="1011.1" y="171.9" width="0.9" height="2" fill="#9c2c55"/>
<rect x="1013.1" y="171.9" width="3.9" height="2" fill="#989254"/>
<rect x="955.9" y="174.9" width="1.1" height="2" fill="#c4c4bc"/>
<rect x="957.0" y="174.9" width="4.8" height="2" fill="#9c2c55"/>
<rect x="961.8" y="174.9" width="1.1" height="2" fill="#c4c4bc"/>
<rect x="961.2" y="177.9" width="6.8" height="2" fill="#9c2c55"/>
<rect x="969.0" y="177.9" width="17.2" height="2" fill="#94948e"/>
<rect x="986.2" y="177.9" width="8.3" height="2" fill="#6f962c"/>
<rect x="994.5" y="177.9" width="2.6" height="2" fill="#7a62ad"/>
<rect x="997.1" y="177.9" width="1.7" height="2" fill="#94948e"/>
<rect x="955.9" y="180.9" width="0.9" height="2" fill="#c4c4bc"/>
<rect x="950.9" y="183.9" width="0.9" height="2" fill="#c4c4bc"/>
<rect x="950.9" y="189.9" width="6.1" height="2" fill="#4b9aa6"/>
<rect x="958.1" y="189.9" width="12.9" height="2" fill="#6f962c"/>
<rect x="972.7" y="189.9" width="0.9" height="2" fill="#9c2c55"/>
<rect x="974.9" y="189.9" width="4.4" height="2" fill="#b27122"/>
<rect x="980.1" y="189.9" width="2.0" height="2" fill="#4b9aa6"/>
<rect x="983.0" y="189.9" width="2.0" height="2" fill="#c4c4bc"/>
<rect x="955.9" y="192.9" width="2.2" height="2" fill="#4f5049"/>
<rect x="959.0" y="192.9" width="6.1" height="2" fill="#4f5049"/>
<rect x="966.8" y="192.9" width="8.1" height="2" fill="#4f5049"/>
<rect x="976.2" y="192.9" width="0.9" height="2" fill="#4f5049"/>
<rect x="978.8" y="192.9" width="27.7" height="2" fill="#4f5049"/>
<rect x="955.9" y="195.9" width="2.2" height="2" fill="#4f5049"/>
<rect x="959.0" y="195.9" width="6.1" height="2" fill="#4f5049"/>
<rect x="966.8" y="195.9" width="8.1" height="2" fill="#4f5049"/>
<rect x="976.2" y="195.9" width="0.9" height="2" fill="#4f5049"/>
<rect x="978.8" y="195.9" width="36.0" height="2" fill="#4f5049"/>
<rect x="955.9" y="198.9" width="2.2" height="2" fill="#4f5049"/>
<rect x="959.0" y="198.9" width="6.1" height="2" fill="#4f5049"/>
<rect x="966.8" y="198.9" width="8.1" height="2" fill="#4f5049"/>
<rect x="976.2" y="198.9" width="0.9" height="2" fill="#4f5049"/>
<rect x="978.8" y="198.9" width="27.7" height="2" fill="#4f5049"/>
<rect x="955.9" y="201.9" width="2.2" height="2" fill="#4f5049"/>
<rect x="959.0" y="201.9" width="6.1" height="2" fill="#4f5049"/>
<rect x="966.8" y="201.9" width="8.1" height="2" fill="#4f5049"/>
<rect x="976.2" y="201.9" width="0.9" height="2" fill="#4f5049"/>
<rect x="978.8" y="201.9" width="25.1" height="2" fill="#4f5049"/>
<rect x="955.9" y="204.9" width="2.2" height="2" fill="#4f5049"/>
<rect x="959.0" y="204.9" width="6.1" height="2" fill="#4f5049"/>
<rect x="966.8" y="204.9" width="8.1" height="2" fill="#4f5049"/>
<rect x="976.2" y="204.9" width="0.9" height="2" fill="#4f5049"/>
<rect x="978.8" y="204.9" width="27.7" height="2" fill="#4f5049"/>
<rect x="955.9" y="207.9" width="2.2" height="2" fill="#4f5049"/>
<rect x="959.0" y="207.9" width="6.1" height="2" fill="#4f5049"/>
<rect x="966.8" y="207.9" width="8.1" height="2" fill="#4f5049"/>
<rect x="976.2" y="207.9" width="0.9" height="2" fill="#4f5049"/>
<rect x="978.8" y="207.9" width="31.0" height="2" fill="#4f5049"/>
<rect x="955.9" y="210.9" width="22.9" height="2" fill="#4f5049"/>
<rect x="955.9" y="213.9" width="2.2" height="2" fill="#4f5049"/>
<rect x="959.0" y="213.9" width="6.1" height="2" fill="#4f5049"/>
<rect x="966.8" y="213.9" width="8.1" height="2" fill="#4f5049"/>
<rect x="976.2" y="213.9" width="0.9" height="2" fill="#4f5049"/>
<rect x="978.8" y="213.9" width="36.0" height="2" fill="#4f5049"/>
<rect x="955.9" y="216.9" width="2.2" height="2" fill="#4f5049"/>
<rect x="959.0" y="216.9" width="6.1" height="2" fill="#4f5049"/>
<rect x="966.8" y="216.9" width="8.1" height="2" fill="#4f5049"/>
<rect x="976.2" y="216.9" width="0.9" height="2" fill="#4f5049"/>
<rect x="978.8" y="216.9" width="27.7" height="2" fill="#4f5049"/>
<rect x="955.9" y="219.9" width="2.2" height="2" fill="#4f5049"/>
<rect x="959.0" y="219.9" width="6.1" height="2" fill="#4f5049"/>
<rect x="966.8" y="219.9" width="8.1" height="2" fill="#4f5049"/>
<rect x="976.2" y="219.9" width="0.9" height="2" fill="#4f5049"/>
<rect x="978.8" y="219.9" width="26.0" height="2" fill="#4f5049"/>
<rect x="955.9" y="222.9" width="2.2" height="2" fill="#4f5049"/>
<rect x="959.0" y="222.9" width="6.1" height="2" fill="#4f5049"/>
<rect x="966.8" y="222.9" width="8.1" height="2" fill="#4f5049"/>
<rect x="976.2" y="222.9" width="0.9" height="2" fill="#4f5049"/>
<rect x="978.8" y="222.9" width="32.1" height="2" fill="#4f5049"/>
<rect x="955.9" y="225.9" width="2.2" height="2" fill="#4f5049"/>
<rect x="959.0" y="225.9" width="6.1" height="2" fill="#4f5049"/>
<rect x="966.8" y="225.9" width="8.1" height="2" fill="#4f5049"/>
<rect x="976.2" y="225.9" width="0.9" height="2" fill="#4f5049"/>
<rect x="978.8" y="225.9" width="31.0" height="2" fill="#4f5049"/>
<rect x="955.9" y="228.9" width="5.9" height="2" fill="#4b9aa6"/>
<rect x="962.9" y="228.9" width="8.1" height="2" fill="#94948e"/>
<rect x="972.7" y="228.9" width="0.9" height="2" fill="#9c2c55"/>
<rect x="974.9" y="228.9" width="29.9" height="2" fill="#989254"/>
<rect x="955.9" y="231.9" width="1.5" height="2" fill="#9c2c55"/>
<rect x="957.9" y="231.9" width="25.1" height="2" fill="#989254"/>
<rect x="983.2" y="231.9" width="1.3" height="2" fill="#9c2c55"/>
<rect x="985.2" y="231.9" width="2.6" height="2" fill="#989254"/>
<rect x="987.8" y="231.9" width="1.3" height="2" fill="#9c2c55"/>
<rect x="989.1" y="231.9" width="5.7" height="2" fill="#989254"/>
<rect x="995.0" y="231.9" width="1.3" height="2" fill="#9c2c55"/>
<rect x="996.7" y="231.9" width="18.1" height="2" fill="#989254"/>
<rect x="1015.5" y="231.9" width="1.1" height="2" fill="#9c2c55"/>
<rect x="1017.0" y="231.9" width="1.1" height="2" fill="#9c2c55"/>
<rect x="1018.5" y="231.9" width="2.6" height="2" fill="#94948e"/>
<rect x="1021.1" y="231.9" width="3.9" height="2" fill="#6f962c"/>
<rect x="1025.1" y="231.9" width="8.7" height="2" fill="#94948e"/>
<rect x="961.2" y="234.9" width="6.8" height="2" fill="#9c2c55"/>
<rect x="969.0" y="234.9" width="3.9" height="2" fill="#94948e"/>
<rect x="955.9" y="237.9" width="1.1" height="2" fill="#c4c4bc"/>
<rect x="957.0" y="237.9" width="4.8" height="2" fill="#9c2c55"/>
<rect x="962.9" y="237.9" width="1.5" height="2" fill="#9c2c55"/>
<rect x="964.4" y="237.9" width="8.5" height="2" fill="#94948e"/>
<rect x="961.2" y="240.9" width="6.8" height="2" fill="#9c2c55"/>
<rect x="969.0" y="240.9" width="8.1" height="2" fill="#94948e"/>
<rect x="978.8" y="240.9" width="0.9" height="2" fill="#9c2c55"/>
<rect x="980.8" y="240.9" width="4.1" height="2" fill="#94948e"/>
<rect x="955.9" y="243.9" width="1.1" height="2" fill="#c4c4bc"/>
<rect x="957.0" y="243.9" width="4.8" height="2" fill="#9c2c55"/>
<rect x="962.9" y="243.9" width="7.0" height="2" fill="#9c2c55"/>
<rect x="971.0" y="243.9" width="2.8" height="2" fill="#989254"/>
<rect x="950.9" y="246.9" width="0.9" height="2" fill="#c4c4bc"/>
<rect x="950.9" y="252.9" width="17.0" height="2" fill="#4f5049"/>
<rect x="950.9" y="255.9" width="6.1" height="2" fill="#4b9aa6"/>
<rect x="958.1" y="255.9" width="14.8" height="2" fill="#6f962c"/>
<rect x="974.0" y="255.9" width="0.9" height="2" fill="#9c2c55"/>
<rect x="975.6" y="255.9" width="0.9" height="2" fill="#94948e"/>
<rect x="976.4" y="255.9" width="8.7" height="2" fill="#b27122"/>
<rect x="985.2" y="255.9" width="0.9" height="2" fill="#94948e"/>
<rect x="985.8" y="255.9" width="7.0" height="2" fill="#b27122"/>
<rect x="994.1" y="255.9" width="0.9" height="2" fill="#9c2c55"/>
<rect x="997.1" y="255.9" width="1.3" height="2" fill="#7a62ad"/>
<rect x="998.5" y="255.9" width="0.9" height="2" fill="#94948e"/>
<rect x="1000.0" y="255.9" width="3.3" height="2" fill="#4b9aa6"/>
<rect x="1003.3" y="255.9" width="0.9" height="2" fill="#c4c4bc"/>
<rect x="955.9" y="258.9" width="7.0" height="2" fill="#94948e"/>
<rect x="964.0" y="258.9" width="0.9" height="2" fill="#9c2c55"/>
<rect x="966.8" y="258.9" width="16.1" height="2" fill="#94948e"/>
<rect x="955.9" y="261.9" width="1.5" height="2" fill="#9c2c55"/>
<rect x="957.9" y="261.9" width="8.9" height="2" fill="#94948e"/>
<rect x="967.9" y="261.9" width="3.3" height="2" fill="#9c2c55"/>
<rect x="973.2" y="261.9" width="1.3" height="2" fill="#7a62ad"/>
<rect x="974.5" y="261.9" width="0.9" height="2" fill="#94948e"/>
<rect x="976.0" y="261.9" width="7.0" height="2" fill="#9c2c55"/>
<rect x="985.2" y="261.9" width="8.3" height="2" fill="#94948e"/>
<rect x="993.4" y="261.9" width="9.8" height="2" fill="#4b9aa6"/>
<rect x="1003.3" y="261.9" width="9.8" height="2" fill="#94948e"/>
<rect x="955.9" y="264.9" width="7.0" height="2" fill="#9c2c55"/>
<rect x="964.0" y="264.9" width="9.2" height="2" fill="#94948e"/>
<rect x="973.2" y="264.9" width="7.6" height="2" fill="#6f962c"/>
<rect x="980.8" y="264.9" width="10.0" height="2" fill="#94948e"/>
<rect x="950.9" y="267.9" width="0.9" height="2" fill="#c4c4bc"/>
<rect x="950.9" y="273.9" width="7.0" height="2" fill="#9c2c55"/>
<rect x="959.0" y="273.9" width="1.7" height="2" fill="#c4c4bc"/>
<rect x="955.9" y="276.9" width="14.0" height="2" fill="#94948e"/>
<rect x="955.9" y="279.9" width="12.0" height="2" fill="#94948e"/>
<rect x="955.9" y="282.9" width="15.1" height="2" fill="#94948e"/>
<rect x="955.9" y="285.9" width="14.0" height="2" fill="#94948e"/>
<rect x="955.9" y="288.9" width="14.0" height="2" fill="#94948e"/>
<rect x="950.9" y="291.9" width="0.9" height="2" fill="#c4c4bc"/>
</svg>
<div class="a" style="left:1050px;top:92px;width:8px;height:714px;background:#272822"></div>
<div class="a" style="left:1050px;top:260px;width:8px;height:266px;background:#8a8a8a"></div>
<!-- ===== console ===== -->
<div class="a" style="left:0;top:807px;width:1058px;height:201px;background:#20211d"></div>
<div class="a" style="left:0;top:806px;width:1058px;height:1px;background:#171815"></div>
<div class="a" style="left:818px;top:803px;width:40px;height:1px;background:#3d3e39"></div>
<div class="a" style="left:818px;top:805px;width:40px;height:1px;background:#3d3e39"></div>
<div class="t" style="left:25px;top:829.5px;font-size:14px;color:#e8e8e8">wap - H5</div>
<div class="a" style="left:18px;top:848px;width:87px;height:1px;background:#cfcfcf"></div>
<!-- console icons -->
<svg style="left:878px;top:828px" width="16" height="16" fill="none" stroke="#d0d0d0" stroke-width="1.1"><ellipse cx="8" cy="9" rx="3.3" ry="4.6"/><path d="M8 4.4v9.2M5.6 4.2Q8 1 10.4 4.2M4.7 9H2M11.3 9H14M5 6.4L2.6 4.6M11 6.4l2.4-1.8M5 11.8L2.6 13.6M11 11.8l2.4 1.8"/></svg>
<svg style="left:909px;top:828px" width="16" height="16" fill="none" stroke="#d0d0d0" stroke-width="1.2"><path d="M4 3.6A5.6 5.6 0 1 1 2.4 8"/><path d="M4.4 0.8L3.6 4l3.2.6"/><path d="M6.6 5.6l4 2.4-4 2.4z" fill="#d0d0d0"/></svg>
<svg style="left:940px;top:829px" width="14" height="14"><rect x="0.6" y="0.6" width="12" height="12" fill="none" stroke="#d0d0d0" stroke-width="1.2"/><rect x="2.6" y="2.6" width="8" height="8" fill="#d8d8d8"/></svg>
<svg style="left:970px;top:829px" width="15" height="14" fill="none" stroke="#d0d0d0" stroke-width="1.2"><path d="M7.5 0.8H0.6v11.8h13V6.5"/><path d="M3.2 4.4l2.6 2.2-2.6 2.2M7.6 9.6h3"/><path d="M11.4 0.2v5M9 2.7h4.9"/></svg>
<svg style="left:1000px;top:831px" width="15" height="9" fill="none" stroke="#d0d0d0" stroke-width="1.4"><path d="M0.8 8l6.7-6.6L14.2 8"/></svg>
<svg style="left:1030px;top:831px" width="15" height="10" fill="none" stroke="#d0d0d0" stroke-width="1.3"><path d="M0.6 0.8l6.4 8M7 0.8l-6.4 8"/><path d="M11.4 0.4v8.4M8.6 6l2.8 3 2.8-3"/></svg>
<!-- console lines -->
<div class="co" style="top:866px"><span class="ts">21:54:15.033</span>   App running at:</div>
<div class="co" style="top:886px"><span class="ts">21:54:15.034</span>   - Local:   <u>http://localhost:8080/</u></div>
<div class="co" style="top:906px"><span class="ts">21:54:15.037</span>   - Network: <u>http://192.168.2.109:8080/</u></div>
<div class="co" style="top:926px"><span class="ts">21:54:15.042</span> <span class="cz"><i class="z" style="width:16px">项</i><i class="z" style="width:16px">目</i></span> 'wap' <span class="cz"><i class="z" style="width:16px">编</i><i class="z" style="width:16px">译</i><i class="z" style="width:16px">成</i><i class="z" style="width:16px">功</i><i class="z" style="width:16px">。</i><i class="z" style="width:16px">前</i><i class="z" style="width:16px">端</i><i class="z" style="width:16px">运</i><i class="z" style="width:16px">行</i><i class="z" style="width:16px">日</i><i class="z" style="width:16px">志</i><i class="z" style="width:16px">，</i><i class="z" style="width:16px">请</i><i class="z" style="width:16px">另</i><i class="z" style="width:16px">行</i><i class="z" style="width:16px">在</i><i class="z" style="width:16px">浏</i><i class="z" style="width:16px">览</i><i class="z" style="width:16px">器</i><i class="z" style="width:16px">的</i><i class="z" style="width:16px">控</i><i class="z" style="width:16px">制</i><i class="z" style="width:16px">台</i><i class="z" style="width:16px">查</i><i class="z" style="width:16px">看</i><i class="z" style="width:16px">。</i></span></div>
<div class="co" style="top:946px"><span class="ts">21:54:15.042</span> <span class="y"><span class="cz"><i class="z" style="width:16px">点</i><i class="z" style="width:16px">击</i><i class="z" style="width:16px">控</i><i class="z" style="width:16px">制</i><i class="z" style="width:16px">台</i><i class="z" style="width:16px">右</i><i class="z" style="width:16px">上</i><i class="z" style="width:16px">角</i></span><b>debug</b><span class="cz"><i class="z" style="width:16px">图</i><i class="z" style="width:16px">标</i><i class="z" style="width:16px">（</i><i class="z" style="width:16px">虫</i><i class="z" style="width:16px">子</i><i class="z" style="width:16px">）</i><i class="z" style="width:16px">，</i><i class="z" style="width:16px">可</i><i class="z" style="width:16px">开</i><i class="z" style="width:16px">启</i><i class="z" style="width:16px">断</i><i class="z" style="width:16px">点</i><i class="z" style="width:16px">调</i><i class="z" style="width:16px">试</i><i class="z" style="width:16px">（</i><i class="z" style="width:16px">添</i><i class="z" style="width:16px">加</i><i class="z" style="width:16px">断</i><i class="z" style="width:16px">点</i><i class="z" style="width:16px">：</i><i class="z" style="width:16px">双</i><i class="z" style="width:16px">击</i><i class="z" style="width:16px">编</i><i class="z" style="width:16px">辑</i><i class="z" style="width:16px">器</i><i class="z" style="width:16px">行</i><i class="z" style="width:16px">号</i><i class="z" style="width:16px">添</i><i class="z" style="width:16px">加</i><i class="z" style="width:16px">断</i><i class="z" style="width:16px">点</i><i class="z" style="width:16px">）</i></span></span></div>
<div class="co" style="top:966px"><span class="ts">21:54:15.080</span> <span class="y"><b>H5</b><span class="cz"><i class="z" style="width:16px">版</i><i class="z" style="width:16px">常</i><i class="z" style="width:16px">见</i><i class="z" style="width:16px">问</i><i class="z" style="width:16px">题</i><i class="z" style="width:16px">参</i><i class="z" style="width:16px">考</i><i class="z" style="width:16px">：</i></span></span><u>https://ask.dcloud.net.cn/article/35232</u></div>
<div class="co" style="top:986px"><span class="ts">21:54:16.031</span> [HMR] Waiting for update signal from WDS...</div>
<div class="a" style="left:1050px;top:983px;width:8px;height:15px;background:#2a2b27"></div>

<!-- ===== status bar ===== -->
<div class="a" style="left:0;top:1007px;width:1451px;height:20px;background:#545454"></div>
<svg style="left:29px;top:1012px" width="14" height="14"><circle cx="7" cy="7" r="6.2" fill="none" stroke="#d6d6d6" stroke-width="1.1"/><circle cx="7" cy="5.4" r="2.2" fill="#c8c8c8"/><path d="M2.8 11.4Q7 6.4 11.2 11.4Q7 14 2.8 11.4z" fill="#c8c8c8"/></svg>
<div class="st" style="left:48px"><i class="z" style="width:12px">未</i><i class="z" style="width:12px">登</i><i class="z" style="width:12px">录</i></div>
<svg style="left:144px;top:1013px" width="13" height="11" fill="none" stroke="#dedede" stroke-width="1"><rect x="0.5" y="0.5" width="2" height="2"/><rect x="0.5" y="4.5" width="2" height="2"/><rect x="0.5" y="8.5" width="2" height="2"/><path d="M4.5 1.5H13M4.5 5.5H13M4.5 9.5H13"/></svg>
<svg style="left:170px;top:1013px" width="14" height="11" fill="none" stroke="#dedede" stroke-width="1"><rect x="0.5" y="0.5" width="12.5" height="10"/><path d="M3 3.2l2.4 2.1L3 7.4M6.6 8h2.8"/></svg>
<svg style="left:194px;top:1012px" width="17" height="13" fill="none" stroke="#dedede" stroke-width="1"><path d="M6 10.6A5 5 0 1 1 10.8 4.4"/><path d="M5.8 0.6C4.2 3 4.2 7.8 5.6 10.4M0.8 5.6h6.6"/><path d="M8.2 11.6h5.4a1.6 1.6 0 0 0 .2-3.2 2.6 2.6 0 0 0-5-.4A1.8 1.8 0 0 0 8.2 11.6z"/></svg>
<div class="st" style="left:1065px"><i class="z" style="width:12px">语</i><i class="z" style="width:12px">法</i><i class="z" style="width:12px">提</i><i class="z" style="width:12px">示</i><i class="z" style="width:12px">库</i></div>
<div class="st" style="left:1151px"><i class="z" style="width:12px">行</i>:41</div>
<div class="st" style="left:1190px"><i class="z" style="width:12px">列</i>:45</div>
<div class="st" style="left:1245px">UTF-8</div>
<div class="st" style="left:1305px">JavaScript</div>
<svg style="left:1380px;top:1010px" width="17" height="16"><circle cx="7.6" cy="8.6" r="5.8" fill="#f4f4f4"/><path d="M7.6 5.4v5.6M5.2 8.8l2.4 2.4L10 8.8" stroke="#444" stroke-width="1.2" fill="none"/><circle cx="13" cy="3.6" r="2.6" fill="#f04a2a"/></svg>
<svg style="left:1411px;top:1011px" width="14" height="15"><path d="M7 0.6a4.4 4.4 0 0 0-4.4 4.4v4L1 11.6h12L11.4 9V5A4.4 4.4 0 0 0 7 0.6z" fill="#b9a45c"/><path d="M5.4 12.6a1.7 1.7 0 0 0 3.2 0z" fill="#b9a45c"/></svg>
<!-- ===== web browser panel ===== -->
<div class="a" style="left:1058px;top:60px;width:393px;height:947px;background:#272822"></div>
<div class="a" style="left:1058px;top:60px;width:1px;height:746px;background:#1d1e1b"></div>
<div class="a" style="left:1059px;top:60px;width:392px;height:28px;background:#1e1f1c"></div>
<div class="a" style="left:1059px;top:60px;width:110px;height:28px;background:#272822"></div>
<div class="t" style="left:1070px;top:68px;font-size:13px;letter-spacing:-0.3px;color:#d4d4d4">Web<i class="z" style="width:12px">浏</i><i class="z" style="width:12px">览</i><i class="z" style="width:12px">器</i></div>
<svg style="left:1146px;top:70px" width="10" height="10"><path d="M0.8 0.8l8 8M8.8 0.8l-8 8" stroke="#d8d8d8" stroke-width="1.2"/></svg>
<div class="a" style="left:1065px;top:95px;width:377px;height:25px;border:1px solid #6e6f69"></div>
<div class="t" style="left:1074px;top:101px;font-size:14px;letter-spacing:-0.18px;color:#d6d6d6">http://localhost:8080/#/</div>
<div class="a" style="left:1065px;top:127px;width:118px;height:25px;border:1px solid #16183a"></div>
<div class="t" style="left:1071px;top:133.5px;font-size:13px;letter-spacing:-0.1px;color:#d6d6d6">iPhone X</div>
<svg style="left:1172px;top:138px" width="7" height="4"><path d="M0 0h7L3.5 4z" fill="#e0e0e0"/></svg>
<!-- browser toolbar icons -->
<svg style="left:1196px;top:133px" width="14" height="14" fill="none" stroke="#e2e2e2" stroke-width="1.3"><path d="M4.6 1.6h8.6v11.6H1.4V5.6"/><path d="M0.8 0.8l6.6 6.6M0.8 5V0.8H5"/></svg>
<svg style="left:1226px;top:133px" width="15" height="15" fill="none" stroke="#e2e2e2" stroke-width="1.35"><circle cx="7.5" cy="7.5" r="2.1"/><path d="M6.2 1h2.6l.5 1.8 1.5.9 1.8-.5 1.3 2.3-1.3 1.3v1.5l1.3 1.3-1.3 2.3-1.8-.5-1.5.9L8.8 14H6.2l-.5-1.8-1.5-.9-1.8.5-1.3-2.3 1.3-1.3V6.8L1.1 5.5l1.3-2.3 1.8.5 1.5-.9z" stroke-linejoin="round"/></svg>
<svg style="left:1257px;top:134px" width="15" height="13" fill="none" stroke="#e2e2e2" stroke-width="1.2"><rect x="0.6" y="0.6" width="13.4" height="11.4"/><path d="M3.2 3.8l2.6 2.4-2.6 2.4M7.4 9.2h3.2"/></svg>
<svg style="left:1286px;top:134px" width="14" height="12" fill="none" stroke="#b8b8b8" stroke-width="1.8"><path d="M13.4 6H1.4M6.4 1L1.2 6l5.2 5"/></svg>
<svg style="left:1317px;top:134px" width="14" height="12" fill="none" stroke="#b8b8b8" stroke-width="1.8"><path d="M0.4 6h12M7.4 1l5.2 5-5.2 5"/></svg>
<svg style="left:1347px;top:133px" width="14" height="14" fill="none" stroke="#e2e2e2" stroke-width="1.3"><path d="M12 8.6A5.4 5.4 0 1 1 10.2 3"/><path d="M8.4 0.6l4.4.4-.6 4.2z" fill="#e2e2e2" stroke="none"/></svg>
<svg style="left:1378px;top:133px" width="11" height="14" fill="none" stroke="#e2e2e2" stroke-width="1.3"><rect x="0.7" y="6.4" width="9.4" height="6.6"/><path d="M2.4 6.4V3.6a3 3 0 0 1 5.8-1"/></svg>
<svg style="left:1408px;top:134px" width="12" height="12" fill="none" stroke="#e2e2e2" stroke-width="1.3"><rect x="0.7" y="0.7" width="3.8" height="3.8"/><rect x="7.3" y="0.7" width="3.8" height="3.8"/><rect x="0.7" y="7.3" width="3.8" height="3.8"/><path d="M6.8 7.3h2M10.6 7v2M6.8 11.2h1.4M10 11.2h1.6" stroke-width="1.5"/></svg>
<div class="a" style="left:1059px;top:160px;width:392px;height:1px;background:#1a1b18"></div>
<!-- ===== phone preview ===== -->
<div class="a" style="left:1067px;top:178px;width:375px;height:812px;background:#f1f5f6;overflow:hidden"></div>
<svg style="left:1086px;top:189px" width="31" height="31"><circle cx="15.3" cy="15.5" r="15.2" fill="#2a6ff6"/><clipPath id="av"><circle cx="15.3" cy="15.5" r="12.6"/></clipPath><g clip-path="url(#av)"><path d="M2 31Q3 19 15.3 19Q27.6 19 28.6 31z" fill="#fff"/><path d="M14.2 19.5h2.2l.9 6.6-2 2.4-2-2.4z" fill="#2a6ff6"/></g><path d="M10.6 8.6Q11 4.6 15.6 4.8Q20.2 5 20 10.4Q19.8 16.6 15.3 16.6Q10.8 16.6 10.6 11z" fill="#fff"/></svg>
<div class="a" style="left:1126px;top:190px;width:195px;height:27px;border-radius:14px;background:#fff"></div>
<svg style="left:1137px;top:196px" width="17" height="16" fill="none" stroke="#9a9a9a" stroke-width="1.7"><circle cx="7.2" cy="7.2" r="5.8"/><path d="M11.4 11.4l4 4" stroke-linecap="round"/></svg>
<div class="t" style="left:1160.5px;top:195.7px;font-size:16px;color:#a0a0a0;letter-spacing:-0.23px;transform-origin:0 0;transform:scaleX(0.9665);">Search</div>
<svg style="left:1332px;top:192px" width="22" height="21" fill="none" stroke="#9a9a9a" stroke-width="1.5"><path d="M2 14V10.4a9 9 0 0 1 18 0V14"/><rect x="1.6" y="12" width="4.6" height="7.6" rx="2"/><rect x="15.8" y="12" width="4.6" height="7.6" rx="2"/></svg>
<svg style="left:1366px;top:191px" width="23" height="23" fill="none" stroke="#9a9a9a" stroke-width="1.5"><path d="M3.6 18.6V9.4a7.9 7.9 0 0 1 15.8 0v9.2"/><path d="M0.6 18.6h21.8"/><path d="M9.4 19.4a2.2 2.2 0 0 0 4.2 0"/></svg>
<svg style="left:1401px;top:192px" width="21" height="21" fill="none" stroke="#9a9a9a" stroke-width="1.4"><circle cx="10.5" cy="10.5" r="9.6"/><path d="M2 7.6Q5.6 9.6 6.2 12.6T9.8 14.4Q12 12 11 10T14.6 6.4Q15.4 3.4 13.6 1.6"/><path d="M8.8 19.6Q12 17.6 14.8 17.8T19 14.6"/></svg>
<div class="a" style="left:1085px;top:237px;width:339px;height:135px;border-radius:9px;background:linear-gradient(180deg,#04163a 0%,#04122e 55%,#030b1e 100%);overflow:hidden"><svg style="left:0;top:0" width="339" height="135"><defs><radialGradient id="gc" cx="0.28" cy="0.3" r="0.8"><stop offset="0" stop-color="#133286"/><stop offset="0.45" stop-color="#0d2468"/><stop offset="0.8" stop-color="#07173f" stop-opacity="0.85"/><stop offset="1" stop-color="#051233" stop-opacity="0"/></radialGradient><linearGradient id="g1" x1="0" y1="0" x2="0.5" y2="1"><stop offset="0" stop-color="#6c8cff"/><stop offset="0.5" stop-color="#3f6cf2"/><stop offset="1" stop-color="#2660ea"/></linearGradient><linearGradient id="g2" gradientUnits="userSpaceOnUse" x1="252" y1="44" x2="268" y2="36"><stop offset="0" stop-color="#14c49c"/><stop offset="0.3" stop-color="#14c49c"/><stop offset="0.42" stop-color="#d2f3f6"/><stop offset="0.68" stop-color="#c4eef4"/><stop offset="0.8" stop-color="#16c6a2"/><stop offset="1" stop-color="#16c6a2"/></linearGradient><linearGradient id="g2b" gradientUnits="userSpaceOnUse" x1="258" y1="40" x2="288" y2="91"><stop offset="0" stop-color="#1a8fe6" stop-opacity="0"/><stop offset="0.55" stop-color="#1a8fe6" stop-opacity="0.55"/><stop offset="1" stop-color="#1a86e4" stop-opacity="1"/></linearGradient><linearGradient id="g3" x1="0" y1="0" x2="1" y2="0.4"><stop offset="0" stop-color="#2246dc"/><stop offset="0.5" stop-color="#3555e4"/><stop offset="1" stop-color="#3a3ccc"/></linearGradient><linearGradient id="g4" gradientUnits="userSpaceOnUse" x1="300" y1="25" x2="339" y2="80"><stop offset="0" stop-color="#10297a" stop-opacity="0.95"/><stop offset="1" stop-color="#0a1c52" stop-opacity="0"/></linearGradient></defs><circle cx="231" cy="7" r="68" fill="url(#gc)"/><path d="M292 27L314 14L339 48V92z" fill="url(#g4)"/><path d="M234.4 0Q247 9 253.5 22L259.5 25.8L265.6 34.6L267.6 37.3L252 45L245.2 34.6V28.5L248 24Q239 14 234.4 0z" fill="url(#g1)"/><path d="M248 24L253.5 22L259.5 25.8L267.6 37.3L251.5 44.8L245.2 34.6V28.5z" fill="#2763ea"/><path d="M251 43.6L266.4 35.8L277.1 61.8L288.6 91L269 69.9z" fill="url(#g2)"/><path d="M251 43.6L266.4 35.8L277.1 61.8L288.6 91L269 69.9z" fill="url(#g2b)"/><path d="M288.6 91Q297 104 315 122.8Q324 131 334 135H303Q297 113 288.6 91z" fill="url(#g3)"/><path d="M288.6 91Q296 110 308 135H303Q297 113 288.6 91z" fill="#2a48e0"/><path d="M248.6 89.2l7.9 13" stroke="#1640b0" stroke-width="1.1"/><path d="M327 78.3l12 20.7" stroke="#1c4cc8" stroke-width="1.3"/><ellipse cx="303.6" cy="21.4" rx="12" ry="11.2" fill="#8d5df0" transform="rotate(-25 303.6 21.4)"/><ellipse cx="302.6" cy="21.8" rx="11.6" ry="10.8" fill="#19b9aa" transform="rotate(-25 302.6 21.8)"/><ellipse cx="302.8" cy="20.4" rx="10.6" ry="9.4" fill="#d5f1fa" transform="rotate(-25 302.8 20.4)"/><path d="M295.6 19.2l4.4-3.8 7.6-.4 2.2 2.6-4.6 7.8-2.6.2z" fill="#2558da"/></svg></div>
<div class="t" style="left:1103.7px;top:260.4px;font-size:14.5px;font-weight:bold;color:#2e90f4;letter-spacing:-0.44px;transform-origin:0 0;transform:scaleX(0.9150);">VIP member benefits sent non-stop</div>
<div class="a" style="left:1103px;top:284px;width:87px;height:15px;border:1px solid #2e90f4;border-radius:9px"></div>
<div class="a" style="left:1103px;top:284px;width:41px;height:17px;border-radius:9px 6px 6px 9px;background:#2e90f4"></div>
<div class="t" style="left:1117.0px;top:287.7px;font-size:10px;font-weight:bold;color:#fff;letter-spacing:-0.36px;transform-origin:0 0;transform:scaleX(0.9346);">VIP</div>
<div class="t" style="left:1149.7px;top:287.7px;font-size:10px;font-weight:bold;color:#fff;letter-spacing:-0.28px;transform-origin:0 0;transform:scaleX(0.9275);">Benefits</div>
<div class="t" style="left:1103.7px;top:314.4px;font-size:12px;font-weight:bold;color:#f2f2f2;letter-spacing:-0.31px;transform-origin:0 0;transform:scaleX(0.9458);">Free</div><div class="t" style="left:1130.0px;top:314.4px;font-size:12px;font-weight:bold;color:#2e90f4;letter-spacing:-0.69px;transform-origin:0 0;transform:scaleX(0.9058);">USDT</div><div class="t" style="left:1161.2px;top:314.4px;font-size:12px;font-weight:bold;color:#f2f2f2;letter-spacing:-0.08px;transform-origin:0 0;transform:scaleX(0.9850);">with</div><div class="t" style="left:1188.3px;top:314.4px;font-size:12px;font-weight:bold;color:#2e90f4;letter-spacing:-0.44px;transform-origin:0 0;transform:scaleX(0.9320);">VIP</div><div class="t" style="left:1209.0px;top:314.4px;font-size:12px;font-weight:bold;color:#f2f2f2;letter-spacing:-0.00px;transform-origin:0 0;transform:scaleX(0.9998);">top-up</div>
<div class="t" style="left:1103.7px;top:333.9px;font-size:12px;font-weight:bold;color:#f2f2f2;letter-spacing:-0.20px;transform-origin:0 0;transform:scaleX(0.9633);">Enjoy</div><div class="t" style="left:1136.5px;top:333.9px;font-size:12px;font-weight:bold;color:#f2f2f2;letter-spacing:-0.21px;transform-origin:0 0;transform:scaleX(0.9533);">exclusive</div><div class="t" style="left:1189.7px;top:333.9px;font-size:12px;font-weight:bold;color:#2e90f4;letter-spacing:-0.42px;transform-origin:0 0;transform:scaleX(0.9352);">VIP</div><div class="t" style="left:1210.2px;top:333.9px;font-size:12px;font-weight:bold;color:#f2f2f2;letter-spacing:-0.03px;transform-origin:0 0;transform:scaleX(0.9925);">treatment</div>
<svg style="left:1089px;top:395px" width="11" height="13"><path d="M0.4 4.2h10.2v3H0.4z" fill="#4fc23a"/><path d="M1.2 7.2h8.6v5.4H1.2z" fill="#56c63f"/><path d="M4.6 4.2h1.8v8.4H4.6z" fill="#2a9d2a"/><path d="M5.5 4C3 0.4 1 1.4 1.8 3 2.4 4 4.4 4 5.5 4zM5.5 4C8 0.4 10 1.4 9.2 3 8.6 4 6.6 4 5.5 4z" fill="#4a78f0"/></svg>
<div class="t" style="left:1113.9px;top:395.5px;font-size:14.5px;color:#4a4a4a;letter-spacing:-0.38px;transform-origin:0 0;transform:scaleX(0.9381);">XRP up 10%</div>
<svg style="left:1403px;top:394px" width="16" height="13" stroke="#909090" stroke-width="1.5"><path d="M0 1h15.5M0 4.6h15.5M0 8.2h15.5M0 11.8h11"/></svg>
<div class="a" style="left:1085px;top:429px;width:339px;height:156px;border-radius:10px;background:#fff"></div>
<svg style="left:1120.9px;top:446.6px" width="14" height="20"><path d="M7 0.5Q10.2 3 10.2 7.4V9.4L12.7 12.2V14L9.8 13.2 9.4 14.6H4.6L4.2 13.2 1.3 14V12.2L3.8 9.4V7.4Q3.8 3 7 0.5z" fill="#2a6ff6"/><circle cx="7" cy="6" r="1.4" fill="#fff"/><path d="M7 14.8a2 2 0 0 1 2 2Q9 18 7 19.4 5 18 5 16.8a2 2 0 0 1 2-2z" fill="#2a6ff6"/></svg>
<svg style="left:1203.3px;top:447px" width="18" height="19"><path d="M0.6 9.6Q9 15.4 17.4 9.6V12.6Q17 17.8 9 18.2Q1 17.8 0.6 12.6z" fill="#2a6ff6"/><ellipse cx="9" cy="7.2" rx="9.6" ry="6.6" fill="#fff"/><ellipse cx="9" cy="5.8" rx="8.5" ry="5.4" fill="#2a6ff6"/><path d="M9 3.2l4.2 2.5L9 8.2 4.8 5.7z" fill="#fff"/></svg>
<svg style="left:1287.1px;top:446.5px" width="19" height="19"><circle cx="9.5" cy="9.5" r="9.2" fill="#2a6ff6"/><path d="M7.2 5.6h2.6Q13 5.8 13 9.5T9.8 13.4H7.2z" fill="none" stroke="#fff" stroke-width="1.7"/><path d="M5.4 9.5h4.2" stroke="#fff" stroke-width="1.5"/></svg>
<svg style="left:1372.0px;top:447px" width="19" height="19"><circle cx="9.7" cy="9.4" r="6.9" fill="#2a6ff6"/><path d="M1.8 16.4Q11 14.6 17.4 2" stroke="#fff" stroke-width="4.6" fill="none" stroke-linecap="round"/><path d="M1.8 16.4Q11 14.6 17.4 2" stroke="#2a6ff6" stroke-width="2" fill="none" stroke-linecap="round"/></svg>
<div class="t" style="left:1102.3px;top:477.2px;font-size:13px;color:#444;letter-spacing:-0.37px;transform-origin:0 0;transform:scaleX(0.9317);">Recharge</div>
<div class="t" style="left:1187.2px;top:477.2px;font-size:13px;color:#444;letter-spacing:-0.24px;transform-origin:0 0;transform:scaleX(0.9541);">Withdraw</div>
<div class="t" style="left:1284.2px;top:477.2px;font-size:13px;color:#444;letter-spacing:-0.50px;transform-origin:0 0;transform:scaleX(0.9229);">Loan</div>
<div class="t" style="left:1372.6px;top:477.2px;font-size:13px;color:#444;letter-spacing:-0.98px;transform-origin:0 0;transform:scaleX(0.8713);">IEO</div>
<svg style="left:1117.9px;top:514.5px" width="19" height="19"><circle cx="9.5" cy="9.5" r="9.3" fill="#2a6ff6"/><path d="M4.6 10.4Q4.4 7.2 6.8 7.4T9.5 9.6 12.2 11.8 14.4 8.8" fill="none" stroke="#fff" stroke-width="1.7" stroke-linecap="round"/><path d="M4.8 11.6Q7.4 12.6 9.5 9.6T14.2 7.6" fill="none" stroke="#fff" stroke-width="1.3" stroke-linecap="round"/></svg>
<svg style="left:1202.3px;top:515px" width="21" height="20"><circle cx="8.6" cy="4" r="3.4" fill="#2a6ff6"/><path d="M0.4 17.6V14Q0.6 9.6 5 9.6h6Q11 13 11 17.6z" fill="#2a6ff6"/><circle cx="15.4" cy="13.6" r="5" fill="#2a6ff6" stroke="#fff" stroke-width="1.2"/><path d="M13.6 12l1.8 3.4 1.8-3.4" stroke="#fff" stroke-width="1.3" fill="none"/></svg>
<svg style="left:1285.3px;top:513px" width="22" height="24"><circle cx="9.6" cy="9.6" r="3.4" fill="#2a6ff6"/><path d="M1.2 22.4V19Q1.4 14.8 5.8 14.8h6.4Q12 18 12 22.4z" fill="#2a6ff6"/><circle cx="16.6" cy="18.8" r="4.8" fill="#2a6ff6" stroke="#fff" stroke-width="1.2"/><path d="M16.6 16.2v5.2M14 18.8h5.2" stroke="#fff" stroke-width="1.4"/><rect x="1.6" y="0.6" width="19" height="8.4" rx="4.2" fill="#f5941f"/></svg>
<div class="t" style="left:1290.1px;top:515px;font-size:6.5px;font-weight:bold;color:#ffe9c8;letter-spacing:-0.2px">30%</div>
<svg style="left:1370.5px;top:515px" width="22" height="17"><path d="M5 16.4a5 5 0 0 1-1-9.9A6.8 6.8 0 0 1 17 5.2a5.7 5.7 0 0 1-.4 11.2z" fill="#2a6ff6"/><path d="M11 3.4l3 4.8-3 1.8-3-1.8z M8 9.4l3 1.8 3-1.8-3 4.4z" fill="#fff"/></svg>
<div class="t" style="left:1086.4px;top:545.1px;font-size:13px;color:#444;letter-spacing:-0.19px;transform-origin:0 0;transform:scaleX(0.9581);">Smart Contract</div>
<div class="t" style="left:1203.6px;top:545.1px;font-size:13px;color:#444;letter-spacing:-0.77px;transform-origin:0 0;transform:scaleX(0.8914);">VIP</div>
<div class="t" style="left:1262.6px;top:545.1px;font-size:13px;color:#444;letter-spacing:-0.25px;transform-origin:0 0;transform:scaleX(0.9501);">documentary</div>
<div class="t" style="left:1370.7px;top:545.1px;font-size:13px;color:#444;letter-spacing:-0.77px;transform-origin:0 0;transform:scaleX(0.9102);">NFT</div>
<div class="a" style="left:1251px;top:567px;width:8px;height:8px;border-radius:4px;background:#ee4458"></div>
<div class="a" style="left:1067px;top:596px;width:375px;height:394px;border-radius:14px 14px 0 0;background:#fff"></div>
<div class="a" style="left:1085px;top:607px;width:339px;height:78px;border-radius:7px;background:#f1f5fe"></div>
<svg style="left:1090px;top:610px" width="80" height="62"><path d="M2 6l7 2 4 14-6-4z" fill="#dfe6fb"/><path d="M58 48l14 2 8 10-14-4z" fill="#e3e9fb"/><ellipse cx="37" cy="52" rx="22" ry="2.4" fill="#b9c6f2"/><rect x="16" y="19" width="46" height="31" rx="3.5" fill="#bfd0fb"/><rect x="16" y="19" width="46" height="29" rx="3.5" fill="#cddafc"/><path d="M30 29h18v3q0 10-9 10t-9-10z" fill="#eef3ff"/><rect x="30" y="28.6" width="18" height="4.4" rx="1" fill="#3a5ed6"/><path d="M34 38h10" stroke="#9db3f2" stroke-width="1.2"/><path d="M20 34h4M22 32v4" stroke="#a9bcf3" stroke-width="1"/><circle cx="54" cy="24" r="1.8" fill="#f4b13a"/><circle cx="52" cy="24" r="1.8" fill="#ee4a3a"/><circle cx="57" cy="44" r="6.4" fill="#f2b51a"/><circle cx="57" cy="44" r="4.8" fill="#fbd44a"/><path d="M58.6 41.8q-2.6-1-3 2.2t3 2.2M54.4 43.4h3M54.4 44.8h3" stroke="#e9a20e" stroke-width="0.8" fill="none"/><ellipse cx="46" cy="9" rx="5" ry="2.6" transform="rotate(-28 46 9)" fill="#c8d5fb" stroke="#a9bcf6" stroke-width="0.8"/><ellipse cx="14" cy="37" rx="5.4" ry="2.8" transform="rotate(30 14 37)" fill="#c8d5fb" stroke="#a9bcf6" stroke-width="0.8"/></svg>
<div class="t" style="left:1180.5px;top:627.0px;font-size:16px;font-weight:bold;color:#262626;letter-spacing:-0.44px;transform-origin:0 0;transform:scaleX(0.9243);">Quickly buy coins</div>
<div class="t" style="left:1180.5px;top:650.5px;font-size:13px;color:#b4b4b4;letter-spacing:-0.38px;transform-origin:0 0;transform:scaleX(0.9241);">Fast PurchaseUSDT</div>
<div class="a" style="left:1374px;top:624px;width:39px;height:27px;border-radius:50%;background:linear-gradient(90deg,#f0f3fb,#e7eaf0 60%)"></div>
<svg style="left:1383px;top:630px" width="20" height="15" fill="none" stroke="#1c1c1c" stroke-width="1.7"><path d="M1 7.5h16.6M11 1l6.8 6.5-6.8 6.5"/></svg>
<div class="t" style="left:1105.0px;top:700.8px;font-size:16px;color:#383838;letter-spacing:-0.41px;transform-origin:0 0;transform:scaleX(0.9465);">BTC/USDT</div>
<div class="t" style="left:1213.0px;top:700.8px;font-size:16px;color:#383838;letter-spacing:-0.40px;transform-origin:0 0;transform:scaleX(0.9470);">XAUT/USDT</div>
<div class="t" style="left:1330.8px;top:700.8px;font-size:16px;color:#383838;letter-spacing:-0.39px;transform-origin:0 0;transform:scaleX(0.9489);">ETH/USDT</div>
<div class="t" style="left:1119.6px;top:724.0px;font-size:13px;color:#3cc09a;letter-spacing:-0.04px;transform-origin:0 0;transform:scaleX(0.9925);">+1.09%</div>
<div class="t" style="left:1232.7px;top:724.0px;font-size:13px;color:#3cc09a;letter-spacing:-0.06px;transform-origin:0 0;transform:scaleX(0.9898);">+0.16%</div>
<div class="t" style="left:1345.6px;top:724.0px;font-size:13px;color:#3cc09a;letter-spacing:-0.06px;transform-origin:0 0;transform:scaleX(0.9898);">+3.24%</div>
<div class="t" style="left:1099.6px;top:743.8px;font-size:23.5px;font-weight:bold;color:#25b38c;letter-spacing:-0.81px;transform-origin:0 0;transform:scaleX(0.9141);">103664.0</div>
<div class="t" style="left:1211.4px;top:743.8px;font-size:23.5px;font-weight:bold;color:#25b38c;letter-spacing:-0.73px;transform-origin:0 0;transform:scaleX(0.9226);">3252.010</div>
<div class="t" style="left:1324.6px;top:743.8px;font-size:23.5px;font-weight:bold;color:#25b38c;letter-spacing:-0.73px;transform-origin:0 0;transform:scaleX(0.9226);">2567.320</div>
<div class="a" style="left:1085px;top:798px;width:339px;height:1px;background:#ececec"></div>
<div class="a" style="left:1068px;top:808px;width:373px;height:92px;border-radius:11px;background:#dbe8fc"></div>
<div class="t" style="left:1132px;top:827.5px;font-size:15.5px;font-weight:bold;color:#24262b;letter-spacing:0px"><i class="z" style="width:16px">比</i><i class="z" style="width:16px">特</i><i class="z" style="width:16px">资</i><i class="z" style="width:16px">源</i>-<i class="z" style="width:16px">实</i><i class="z" style="width:16px">测</i><i class="z" style="width:16px">分</i><i class="z" style="width:16px">享</i> APP</div>
<div class="t" style="left:1132.2px;top:853.3px;font-size:14px;color:#555b66;letter-spacing:-0.03px;transform-origin:0 0;transform:scaleX(0.9927);">Anytime, anywhere, online</div>
<div class="t" style="left:1132.2px;top:870.3px;font-size:14px;color:#555b66;letter-spacing:0.04px;transform-origin:0 0;transform:scaleX(1.0081);">transactions</div>
<div class="a" style="left:1317px;top:839px;width:85px;height:31px;border-radius:4px;background:#fff"></div>
<div class="t" style="left:1331.6px;top:848.2px;font-size:13px;color:#333;letter-spacing:-0.10px;transform-origin:0 0;transform:scaleX(0.9821);">Download</div>
<svg style="left:1413px;top:848px" width="13" height="13" stroke="#222" stroke-width="1.4"><path d="M1 1l11 11M12 1L1 12"/></svg>
<svg style="left:1091.5px;top:918px" width="27" height="16"><path d="M0.6 15.6L9.2 1.4Q10.2 0 11.2 1.4L19.8 15.6z" fill="#2a6ff6"/><path d="M15 7.6L17.6 3Q18.6 1.6 19.6 3L26.6 15.6H21.6z" fill="#2a6ff6"/></svg>
<div class="t" style="left:1089.0px;top:946.2px;font-size:13px;color:#2a6ff6;letter-spacing:-0.54px;transform-origin:0 0;transform:scaleX(0.9313);">Home</div>
<svg style="left:1169px;top:918px" width="22" height="18"><rect x="0.4" y="0.4" width="21.2" height="17.2" rx="2.6" fill="#8592a6"/><path d="M1 13.6l6-5 4 2.2L21 4.4" stroke="#fff" stroke-width="2" fill="none"/></svg>
<div class="t" style="left:1161.0px;top:945.8px;font-size:13px;color:#8592a6;letter-spacing:-0.21px;transform-origin:0 0;transform:scaleX(0.9613);">Market</div>
<svg style="left:1244px;top:918px" width="23" height="19" fill="#8592a6"><path d="M3.6 18.4V7H0.2L5.2 0.2 10.2 7H6.8v11.4z"/><path d="M15.8 0.4V12H12.4l5 6.8 5-6.8H19V0.4z"/></svg>
<div class="t" style="left:1240.0px;top:945.8px;font-size:13px;color:#8592a6;letter-spacing:-0.42px;transform-origin:0 0;transform:scaleX(0.9250);">Trade</div>
<svg style="left:1320px;top:917px" width="21" height="20"><path d="M17.6 9.4h2.2V16q0 3-3 3H5" stroke="#8592a6" stroke-width="1.6" fill="none"/><rect x="0.4" y="0.4" width="16" height="18.4" rx="2.6" fill="#8592a6"/><path d="M4 5.6h8.6M4 9.6h5.4" stroke="#fff" stroke-width="1.7"/></svg>
<div class="t" style="left:1306.6px;top:945.8px;font-size:13px;color:#8592a6;letter-spacing:-0.19px;transform-origin:0 0;transform:scaleX(0.9587);">Contract</div>
<svg style="left:1395px;top:916px" width="21" height="21"><path d="M5.4 4.4L13 0.6Q14.6 0 15.4 1.6L16.8 4.4z" fill="#8592a6"/><rect x="0.4" y="5" width="19.8" height="15.2" rx="2.4" fill="#8592a6"/><path d="M20.6 9.4h-6.2a2.5 2.5 0 0 0 0 5h6.2z" fill="#fff"/><circle cx="14.8" cy="11.9" r="1.2" fill="#8592a6"/></svg>
<div class="t" style="left:1386.9px;top:945.8px;font-size:13px;color:#8592a6;letter-spacing:-0.33px;transform-origin:0 0;transform:scaleX(0.9370);">Assets</div>
<div class="t" style="left:1230px;top:988px;font-size:16px;font-weight:bold;color:#f26a25;letter-spacing:0;transform-origin:0 50%;transform:scaleX(1.138)">TG:anonsl23x,<span style="font-size:15px"><i class="z" style="width:15px">系</i><i class="z" style="width:15px">统</i><i class="z" style="width:15px">开</i><i class="z" style="width:15px">发</i></span></div>
</div></div></body></html>
